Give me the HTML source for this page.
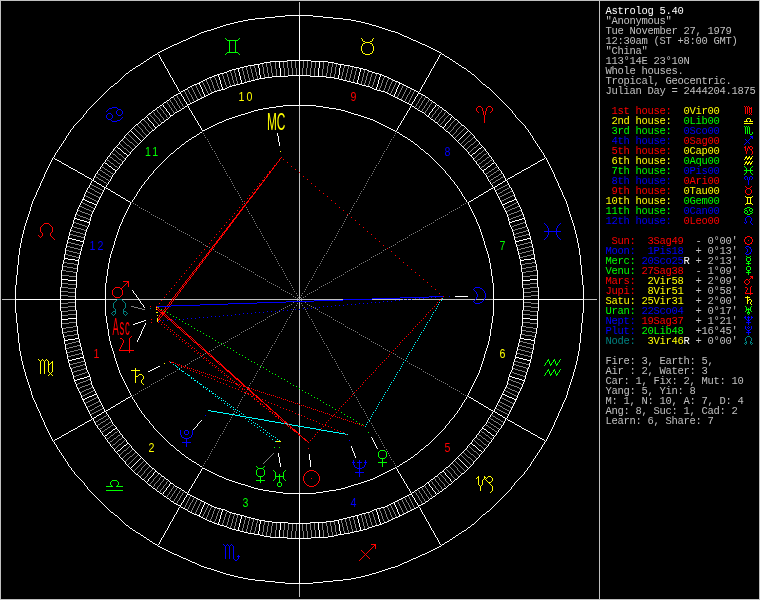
<!DOCTYPE html>
<html lang="en"><head><meta charset="utf-8"><title>Astrolog 5.40 chart</title>
<style>
html,body{margin:0;padding:0;background:#000;overflow:hidden}
svg{display:block;will-change:transform}
.g path{fill:none;stroke-width:1;shape-rendering:crispEdges}
.s text{font-family:"Liberation Mono",monospace;font-size:10.5px;letter-spacing:-.3px;white-space:pre}
text.h{font-family:"Liberation Sans",sans-serif;font-size:12.5px;text-anchor:middle}
text.o{font-family:"Liberation Sans",sans-serif}
</style></head><body>
<svg width="760" height="600" viewBox="0 0 760 600">
<rect width="760" height="600" fill="#000"/>
<g class="g">
<path transform="translate(0,.5)" stroke="#fff" d="m285 15h28m-38 1h10m28 0h10m-58 1h10m48 0h10m-78 1h10m68 0h10m-95 1h7m88 0h8m-108 1h5m103 0h5m-118 1h5m113 0h5m-127 1h4m123 0h4m-135 1h4m131 0h4m-143 1h4m139 0h3m-149 1h3m146 0h4m-156 1h3m153 0h3m-162 1h3m159 0h3m-168 1h3m165 0h3m-174 1h3m171 0h3m-181 1h4m177 0h3m-187 1h3m184 0h4m-194 1h3m191 0h3m-199 1h2m197 0h2m-203 1h2m201 0h2m-207 1h2m205 0h2m-212 1h3m209 0h3m-217 1h2m215 0h2m-221 1h2m219 0h2m-225 1h2m223 0h2m-230 1h3m227 0h3m-235 1h2m233 0h2m-239 1h2m237 0h2m-243 1h2m241 0h2m-248 1h3m245 0h3m-253 1h2m251 0h2m-257 1h2m255 0h2m-261 1h2m259 0h2m-265 1h2m263 0h2m-269 1h2m267 0h2m-273 1h2m271 0h2m-277 1h2m275 0h2m-281 1h2m279 0h2m-286 2h2m285 0h2m-291 1h2m290 1h2m-297 1h2m295 0h2m-302 2h2m301 0h2m-165 1h24m-167 1h2m124 0h17m24 0h17m125 0h2m-191 1h6m58 0h6m-193 1h2m117 0h4m70 0h4m118 0h2m-204 1h6m78 0h6m-206 1h2m108 0h6m90 0h6m109 0h2m-325 1h2m106 0h4m102 0h4m-114 1h4m110 0h5m103 0h2m-331 1h2m101 0h4m119 0h4m101 0h2m-234 1h4m127 0h4m-237 1h2m97 0h3m135 0h2m-142 1h2m140 0h3m96 0h2m-246 1h3m145 0h3m-249 1h2m92 0h4m151 0h4m-162 1h3m159 0h3m90 0h2m-260 1h3m71 0h22m72 0h2m-172 1h2m58 0h16m22 0h16m58 0h3m-178 1h3m53 0h7m54 0h8m53 0h2m-182 1h2m50 0h6m69 0h5m50 0h2m-186 1h2m48 0h4m80 0h4m48 0h2m-190 1h2m46 0h4m88 0h4m46 0h2m-194 1h2m44 0h4m96 0h4m44 0h3m-199 1h2m43 0h3m104 0h4m43 0h2m-285 1h2m80 0h3m40 0h4m111 0h4m40 0h3m-208 1h3m39 0h4m119 0h3m40 0h2m79 0h2m-293 1h2m38 0h4m126 0h4m38 0h2m-295 1h2m77 0h2m37 0h3m134 0h4m36 0h2m-220 1h2m37 0h2m141 0h2m36 0h2m77 0h2m-264 1h2m145 0h2m36 0h2m-227 1h2m34 0h4m149 0h3m35 0h2m-231 1h2m32 0h4m156 0h4m33 0h2m-235 1h2m31 0h3m164 0h4m31 0h2m-206 1h2m171 0h2m-209 1h3m29 0h2m175 0h2m29 0h3m-245 1h2m30 0h2m179 0h2m30 0h2m-249 1h2m30 0h2m183 0h2m30 0h2m-221 1h2m187 0h2m-224 1h2m29 0h2m191 0h2m29 0h2m-228 1h2m195 0h2m-201 1h2m199 0h2m-234 1h2m27 0h2m203 0h2m27 0h2m-238 1h2m207 0h2m-241 1h2m26 0h2m211 0h2m26 0h2m-245 1h2m215 0h2m-222 1h3m219 0h3m-252 1h2m121 0h33m121 0h2m-254 1h2m89 0h7m33 0h7m89 0h2m-257 1h2m110 0h7m47 0h6m111 0h2m-260 1h2m79 0h6m60 0h7m79 0h2m-159 1h5m73 0h5m-188 1h2m24 0h2m73 0h4m83 0h4m73 0h2m24 0h2m-269 1h2m72 0h3m91 0h3m72 0h2m-247 1h2m71 0h3m97 0h3m71 0h2m-275 1h2m94 0h3m103 0h3m-113 1h4m109 0h4m91 0h2m-281 1h3m65 0h3m117 0h3m-126 1h3m123 0h3m63 0h2m-197 1h3m129 0h3m-138 1h3m135 0h3m-228 1h2m22 0h2m58 0h3m141 0h3m58 0h2m22 0h2m-233 1h2m147 0h2m-153 1h2m151 0h2m-215 1h2m55 0h3m155 0h2m56 0h2m-220 1h2m160 0h2m-245 1h2m77 0h2m164 0h2m-225 1h2m53 0h2m168 0h2m77 0h2m-253 1h2m172 0h2m53 0h2m-287 1h2m52 0h2m176 0h2m53 0h2m-237 1h2m180 0h2m-186 1h2m184 0h2m-241 1h2m48 0h3m188 0h2m51 1h2m-248 1h2m195 0h2m-202 2h2m201 0h2m-208 2h2m207 0h2m-213 1h2m211 0h2m-218 2h2m217 0h2m-224 2h2m223 0h2m-231 3h2m231 0h2m-299 4h2m57 0h2m300 0h2m-60 1h2m-299 4h2m45 0h2m253 0h2m45 0h2m-348 2h2m341 0h2m-417 4h2m485 0h2m-487 1h2m481 0h2m-483 1h2m477 0h2m-478 2h2m41 0h2m385 0h2m41 0h2m-473 1h2m467 0h2m-469 1h2m463 0h2m-424 1h2m377 0h2m-421 1h2m457 0h2m-459 1h2m453 0h2m-455 1h2m38 0h2m369 0h2m38 0h2m-451 1h2m38 0h2m365 0h2m38 0h2m-446 2h2m439 0h2m-441 1h2m435 0h2m-437 1h2m431 0h2m-432 2h2m425 0h2m-427 1h2m421 0h2m-423 1h2m417 0h2m-418 2h2m411 0h2m-413 1h2m407 0h2m-408 2h2m401 0h2m-403 1h2m397 0h2m-398 2h2m391 0h2m-393 1h2m387 0h2m-389 1h2m383 0h2m-385 1h2m379 0h2m-380 2h2m373 0h2m-375 1h2m369 0h2m-370 2h2m363 0h2m-365 1h2m359 0h2m-360 2h2m353 0h2m-355 1h2m349 0h2m-394 1h3m429 0h3m-432 1h2m39 0h2m343 0h2m39 0h2m-427 1h2m39 0h2m339 0h2m38 0h3m-423 1h3m415 0h2m-417 1h2m411 0h2m-413 1h3m405 0h3m-431 14h3m445 0h3m-448 1h3m439 0h3m-442 1h4m431 0h4m-435 1h3m425 0h3m-428 1h3m419 0h3m-444 16h4m455 0h4m-459 1h4m447 0h4m-451 1h4m439 0h4m-443 1h4m431 0h4m-455 17h4m463 0h4m-467 1h7m449 0h7m-456 1h4m441 0h4m-463 19h7m462 0h8m-470 1h9m445 0h8m-75 16h13m-453 3h91m387 0h91m-516 19h9m445 0h8m-469 1h7m462 0h8m-394 1h2m-5 1h3m-6 1h3m-6 1h3m-5 1h2m-60 14h4m441 0h4m-456 1h7m449 0h7m-467 1h4m463 0h4m-455 17h4m431 0h4m-443 1h4m439 0h4m-451 1h4m447 0h4m-459 1h4m455 0h4m-373 6h2m-4 1h2m-4 1h2m-4 1h2m-4 1h2m-4 1h2m-63 5h3m419 0h3m-428 1h3m425 0h3m-435 1h4m431 0h4m-442 1h3m439 0h3m-448 1h3m445 0h3m-431 14h3m405 0h3m-413 1h2m411 0h2m-418 1h3m415 0h2m-422 1h2m39 0h2m339 0h2m38 0h3m-427 1h2m39 0h2m343 0h2m39 0h2m-432 1h3m429 0h3m-394 1h2m349 0h2m-355 1h2m353 0h2m-360 2h2m359 0h2m-365 1h2m363 0h2m-370 2h2m369 0h2m-375 1h2m373 0h2m-380 2h2m379 0h2m-385 1h2m383 0h2m-389 1h2m387 0h2m-393 1h2m391 0h2m-398 2h2m397 0h2m-403 1h2m401 0h2m-408 2h2m407 0h2m-413 1h2m411 0h2m-418 2h2m417 0h2m-423 1h2m421 0h2m-427 1h2m425 0h2m-432 2h2m431 0h2m-437 1h2m435 0h2m-441 1h2m439 0h2m-446 2h2m38 0h2m365 0h2m38 0h2m-451 1h2m38 0h2m369 0h2m38 0h2m-455 1h2m453 0h2m-459 1h2m457 0h2m-421 1h2m377 0h2m-424 1h2m463 0h2m-469 1h2m467 0h2m-473 1h2m41 0h2m385 0h2m41 0h2m-478 2h2m477 0h2m-483 1h2m481 0h2m-487 1h2m485 0h2m-417 4h2m341 0h2m-348 2h2m45 0h2m253 0h2m45 0h2m-54 4h2m-305 1h2m57 0h2m300 0h2m-299 4h2m231 0h2m-231 3h2m223 0h2m-224 2h2m217 0h2m-218 2h2m211 0h2m-213 1h2m207 0h2m-208 2h2m201 0h2m-202 2h2m195 0h2m47 1h2m-296 1h2m48 0h3m188 0h2m-190 1h2m184 0h2m-186 1h2m180 0h2m-236 1h2m52 0h2m176 0h2m53 0h2m-233 1h2m172 0h2m53 0h2m-284 1h2m53 0h2m168 0h2m77 0h2m-328 1h2m77 0h2m164 0h2m-166 1h2m160 0h2m-219 1h2m55 0h3m155 0h2m56 0h2m-215 1h2m151 0h2m-153 1h2m147 0h2m-233 1h2m22 0h2m58 0h3m141 0h3m58 0h2m22 0h2m-228 1h3m135 0h3m-138 1h3m129 0h3m-132 1h3m123 0h3m63 0h2m-259 1h3m65 0h3m117 0h3m-120 1h4m109 0h4m91 0h2m-302 1h2m94 0h3m103 0h3m-179 1h2m71 0h3m97 0h3m71 0h2m-247 1h2m72 0h3m91 0h3m72 0h2m-269 1h2m24 0h2m73 0h4m83 0h4m73 0h2m24 0h2m-188 1h5m73 0h5m-159 1h2m79 0h6m60 0h7m79 0h2m-260 1h2m110 0h7m47 0h6m111 0h2m-257 1h2m89 0h7m33 0h7m89 0h2m-254 1h2m121 0h33m121 0h2m-252 1h3m219 0h3m-222 1h2m215 0h2m-245 1h2m26 0h2m211 0h2m26 0h2m-241 1h2m207 0h2m-238 1h2m27 0h2m203 0h2m27 0h2m-234 1h2m199 0h2m-201 1h2m195 0h2m-228 1h2m29 0h2m191 0h2m29 0h2m-224 1h2m187 0h2m-221 1h2m30 0h2m183 0h2m30 0h2m-249 1h2m30 0h2m179 0h2m30 0h2m-245 1h3m29 0h2m175 0h2m29 0h3m-209 1h2m171 0h2m-206 1h2m31 0h3m164 0h4m31 0h2m-235 1h2m32 0h4m156 0h4m33 0h2m-231 1h2m34 0h4m149 0h3m35 0h2m-189 1h2m145 0h2m36 0h2m-224 1h2m37 0h2m141 0h2m36 0h2m77 0h2m-378 1h2m77 0h2m37 0h3m134 0h4m36 0h2m-216 1h2m38 0h4m126 0h4m38 0h2m-212 1h3m39 0h4m119 0h3m40 0h2m79 0h2m-370 1h2m80 0h3m40 0h4m111 0h4m40 0h3m-203 1h2m43 0h3m104 0h4m43 0h2m-199 1h2m44 0h4m96 0h4m44 0h3m-195 1h2m46 0h4m88 0h4m46 0h2m-190 1h2m48 0h4m80 0h4m48 0h2m-186 1h2m50 0h6m69 0h5m50 0h2m-182 1h3m53 0h7m54 0h8m53 0h2m-177 1h2m58 0h16m22 0h16m58 0h3m-173 1h3m71 0h22m72 0h2m-167 1h3m159 0h3m90 0h2m-348 1h2m92 0h4m151 0h4m-155 1h3m145 0h3m-148 1h2m140 0h3m96 0h2m-340 1h2m97 0h3m135 0h2m-137 1h4m127 0h4m-234 1h2m101 0h4m119 0h4m101 0h2m-226 1h4m110 0h5m103 0h2m-328 1h2m106 0h4m102 0h4m-216 1h2m108 0h6m90 0h6m109 0h2m-207 1h6m78 0h6m-203 1h2m117 0h4m70 0h4m118 0h2m-194 1h6m58 0h6m-190 1h2m124 0h17m24 0h17m125 0h2m-168 1h24m-164 1h2m301 0h2m-302 2h2m295 0h2m-4 1h2m-294 1h2m0 1h2m285 0h2m-286 2h2m279 0h2m-281 1h2m275 0h2m-277 1h2m271 0h2m-273 1h2m267 0h2m-269 1h2m263 0h2m-265 1h2m259 0h2m-261 1h2m255 0h2m-257 1h2m251 0h2m-253 1h3m245 0h3m-248 1h2m241 0h2m-243 1h2m237 0h2m-239 1h2m233 0h2m-235 1h3m227 0h3m-230 1h2m223 0h2m-225 1h2m219 0h2m-221 1h2m215 0h2m-217 1h3m209 0h3m-212 1h2m205 0h2m-207 1h2m201 0h2m-203 1h2m197 0h2m-199 1h3m191 0h3m-194 1h3m184 0h4m-188 1h4m177 0h3m-180 1h3m171 0h3m-174 1h3m165 0h3m-168 1h3m159 0h3m-162 1h3m153 0h3m-156 1h3m146 0h4m-150 1h4m139 0h3m-142 1h4m131 0h4m-135 1h4m123 0h4m-127 1h5m113 0h5m-118 1h5m103 0h5m-108 1h7m88 0h8m-96 1h10m68 0h10m-78 1h10m48 0h10m-58 1h10m28 0h10m-38 1h28"/>
<path transform="translate(.5,0)" stroke="#fff" d="m15 285v14m0 1v13m1-38v10m0 28v10m1-58v10m0 48v10m1-78v10m0 68v10m1-95v7m0 88v8m1-108v5m0 103v5m1-118v5m0 113v5m1-127v4m0 123v4m1-135v4m0 131v4m1-143v4m0 139v3m1-149v3m0 146v4m1-156v3m0 153v3m1-162v3m0 159v3m1-168v3m0 165v3m1-174v3m0 171v3m1-181v4m0 177v3m1-187v3m0 184v4m1-194v3m0 191v3m1-199v2m0 197v2m1-203v2m0 201v2m1-207v2m0 205v2m1-212v3m0 209v3m1-217v2m0 215v2m1-221v2m0 219v2m1-225v2m0 223v2m1-230v3m0 227v3m1-235v2m0 233v2m1-239v2m0 237v2m1-243v2m0 241v2m1-248v3m0 245v3m1-253v2m0 251v2m1-257v2m0 255v2m1-261v2m0 259v2m1-265v2m0 263v2m1-269v2m0 267v2m1-273v2m0 271v2m1-277v2m0 275v2m1-281v2m0 279v2m1-284v1m0 283v1m1-287v2m0 1v1m0 281v1m0 1v2m1-291v2m0 289v1m1-293v1m0 292v2m1-297v2m0 295v2m1-300v1m0 299v1m1-303v2m0 301v2m1-306v1m0 140v12m0 1v11m0 141v1m1-309v2m0 16v1m0 107v9m0 1v7m0 24v8m0 1v8m0 108v1m0 16v2m1-312v1m0 120v6m0 58v6m0 121v1m1-315v2m0 117v4m0 70v4m0 118v2m1-318v1m0 113v4m0 1v1m0 78v2m0 1v3m0 114v1m1-321v2m0 108v6m0 90v6m0 109v2m1-325v2m0 106v4m0 102v4m0 107v1m1-327v1m0 104v4m0 110v5m0 103v2m1-331v2m0 31v1m0 69v2m0 1v1m0 119v1m0 1v2m0 69v1m0 31v2m1-334v1m0 99v4m0 127v4m0 99v1m1-337v2m0 97v3m0 135v2m0 98v1m1-339v1m0 97v2m0 140v3m0 96v2m1-342v1m0 95v3m0 145v3m0 95v1m1-345v2m0 92v4m0 151v4m0 92v1m1-347v1m0 91v1m0 1v1m0 159v1m0 1v1m0 90v2m1-350v1m0 89v3m0 71v11m0 1v10m0 72v2m0 90v1m1-352v1m0 88v2m0 58v8m0 1v7m0 22v8m0 1v7m0 58v3m0 88v1m1-354v1m0 48v1m0 37v3m0 53v7m0 54v8m0 53v2m0 38v1m0 48v1m1-356v1m0 85v2m0 50v1m0 1v4m0 69v4m0 51v2m0 86v1m1-358v1m0 84v2m0 48v4m0 80v4m0 48v2m0 85v1m1-360v1m0 83v2m0 46v4m0 88v4m0 46v2m0 84v1m1-362v1m0 82v2m0 44v4m0 96v4m0 44v3m0 82v1m1-364v1m0 82v1m0 43v3m0 104v4m0 43v1m0 82v1m1-367v2m0 80v2m0 41v1m0 1v2m0 111v2m0 1v1m0 41v2m0 80v1m1-369v1m0 60v1m0 18v3m0 39v4m0 119v3m0 40v2m0 19v1m0 59v2m1-372v1m0 78v2m0 38v4m0 126v4m0 38v2m0 79v1m1-375v2m0 77v2m0 37v3m0 134v4m0 36v2m0 78v1m1-377v1m0 77v2m0 37v2m0 141v2m0 36v2m0 77v2m1-380v1m0 77v1m0 37v2m0 145v2m0 36v2m0 77v1m1-382v1m0 76v2m0 34v1m0 1v2m0 149v2m0 36v2m0 76v1m1-384v1m0 75v2m0 32v4m0 156v4m0 33v2m0 75v1m1-386v1m0 72v1m0 1v2m0 31v3m0 164v4m0 31v2m0 1v1m0 72v1m1-388v1m0 106v2m0 171v2m0 106v1m1-390v1m0 73v2m0 30v2m0 175v2m0 30v2m0 73v1m1-392v1m0 72v2m0 30v2m0 179v2m0 30v2m0 72v1m1-394v1m0 71v2m0 30v2m0 183v2m0 30v2m0 71v1m1-396v1m0 71v1m0 8v1m0 22v1m0 187v1m0 22v1m0 8v1m0 71v1m1-398v1m0 70v2m0 29v2m0 191v2m0 29v2m0 70v1m1-400v1m0 70v1m0 29v2m0 195v2m0 29v1m0 70v1m1-402v1m0 70v1m0 28v2m0 199v2m0 28v1m0 70v1m1-404v1m0 69v2m0 27v2m0 203v2m0 27v2m0 69v1m1-406v1m0 69v1m0 18v1m0 8v2m0 207v2m0 8v1m0 18v1m0 69v1m1-408v1m0 68v2m0 26v2m0 211v2m0 26v2m0 68v1m1-410v1m0 68v1m0 26v2m0 215v2m0 26v1m0 68v1m1-412v1m0 68v1m0 25v2m0 219v2m0 25v1m0 68v1m1-414v1m0 67v2m0 121v16m0 1v16m0 121v2m0 67v1m1-416v1m0 67v1m0 25v2m0 89v7m0 33v7m0 89v2m0 25v1m0 67v1m1-418v1m0 66v2m0 5v1m0 19v1m0 84v7m0 47v6m0 85v1m0 19v1m0 5v2m0 66v1m1-420v1m0 66v1m0 8v1m0 16v2m0 79v6m0 60v7m0 79v2m0 16v1m0 8v1m0 66v1m1-422v1m0 66v1m0 25v1m0 76v5m0 73v5m0 76v1m0 25v1m0 66v1m1-424v1m0 65v2m0 24v2m0 9v1m0 63v4m0 83v4m0 63v1m0 9v2m0 24v2m0 65v1m1-360v1m0 14v1m0 9v2m0 72v3m0 91v3m0 72v2m0 9v1m0 14v1m1-296v1m0 16v1m0 6v2m0 71v3m0 97v3m0 71v2m0 6v1m0 16v1m1-363v1m0 63v2m0 23v1m0 70v3m0 103v3m0 70v1m0 23v1m0 64v1m1-430v1m0 63v1m0 24v1m0 67v4m0 109v4m0 67v1m0 23v2m0 63v1m1-368v1m0 23v2m0 20v1m0 44v3m0 117v3m0 44v1m0 20v1m0 24v1m1-306v1m0 88v3m0 123v3m0 63v1m0 24v1m1-371v1m0 62v1m0 1v1m0 21v1m0 62v3m0 129v3m0 62v1m0 21v1m0 1v1m0 62v1m1-436v1m0 62v1m0 23v1m0 60v3m0 135v3m0 60v1m0 23v1m0 62v1m1-438v1m0 61v2m0 22v2m0 58v3m0 141v3m0 58v2m0 22v2m0 61v1m1-440v1m0 61v1m0 7v1m0 15v1m0 30v1m0 27v2m0 147v2m0 27v1m0 30v1m0 15v1m0 7v1m0 61v1m1-442v1m0 61v1m0 9v1m0 13v1m0 57v2m0 151v2m0 57v1m0 13v1m0 9v1m0 61v1m1-444v1m0 61v1m0 11v1m0 10v2m0 55v3m0 155v2m0 56v2m0 10v1m0 11v1m0 61v1m1-446v1m0 61v1m0 13v1m0 8v1m0 55v2m0 160v2m0 56v1m0 8v1m0 13v1m0 61v1m1-448v1m0 60v2m0 22v1m0 54v2m0 164v2m0 55v1m0 22v1m0 61v1m1-450v1m0 60v1m0 22v2m0 39v1m0 13v2m0 168v2m0 14v1m0 39v1m0 22v2m0 60v1m1-391v1m0 19v1m0 2v1m0 53v2m0 172v2m0 53v2m0 2v1m0 19v1m1-332v1m0 22v1m0 52v2m0 176v2m0 53v1m0 22v1m1-394v1m0 59v1m0 74v2m0 180v2m0 75v1m0 59v1m1-456v1m0 59v1m0 22v1m0 50v2m0 184v2m0 51v1m0 22v1m0 59v1m1-398v1m0 21v2m0 48v3m0 188v2m0 1v1m0 48v1m0 22v1m1-340v1m0 1v1m0 19v1m0 243v1m0 50v2m0 19v1m0 1v1m1-401v1m0 58v1m0 3v1m0 17v1m0 49v2m0 88v1m0 106v2m0 49v1m0 17v1m0 3v1m0 58v1m1-403v1m0 5v1m0 15v1m0 49v1m0 91v2m0 106v1m0 49v1m0 15v1m0 5v1m1-346v1m0 7v1m0 13v1m0 48v2m0 94v1m0 106v2m0 48v1m0 13v1m0 7v1m1-406v1m0 57v1m0 9v1m0 11v1m0 48v1m0 97v1m0 107v1m0 48v1m0 11v1m0 9v1m0 57v1m1-396v1m0 9v1m0 47v2m0 99v2m0 106v2m0 47v1m0 9v1m1-326v1m0 7v1m0 46v2m0 103v1m0 42v2m0 63v2m0 46v1m0 7v1m1-339v1m0 14v1m0 5v1m0 46v1m0 106v2m0 38v2m0 67v1m0 46v1m0 5v1m0 14v1m1-354v1m0 16v1m0 3v1m0 45v2m0 109v1m0 35v2m0 70v2m0 45v1m0 3v1m0 16v1m1-413v1m0 56v1m0 18v1m0 1v1m0 45v1m0 112v2m0 31v2m0 74v1m0 45v1m0 1v1m0 18v1m0 56v1m1-415v1m0 20v1m0 44v2m0 115v1m0 27v3m0 77v2m0 44v1m0 20v1m1-339v1m0 44v1m0 118v1m0 24v2m0 82v1m0 44v1m1-397v1m0 76v1m0 44v1m0 120v2m0 20v2m0 85v1m0 44v1m0 76v1m1-419v1m0 19v1m0 43v2m0 123v1m0 17v2m0 88v2m0 43v1m0 19v1m1-364v1m0 19v1m0 43v1m0 141v2m0 92v1m0 43v1m0 19v1m1-422v1m0 55v1m0 19v1m0 43v1m0 237v1m0 43v1m0 19v1m0 55v1m1-424v1m0 1v1m0 17v1m0 43v1m0 239v1m0 43v1m0 17v1m0 1v1m1-370v1m0 3v2m0 14v1m0 42v2m0 241v1m0 43v1m0 14v2m0 3v1m1-427v1m0 61v1m0 12v1m0 42v1m0 244v2m0 42v1m0 12v1m0 61v1m1-420v1m0 10v1m0 42v1m0 247v1m0 42v1m0 10v1m1-366v1m0 9v1m0 8v1m0 42v1m0 249v1m0 42v1m0 8v1m0 9v1m1-431v1m0 54v1m0 11v1m0 49v1m0 251v1m0 49v1m0 11v1m0 54v1m1-419v2m0 45v2m0 253v2m0 45v2m1-349v1m0 2v1m0 40v1m0 257v1m0 40v1m0 2v1m1-364v1m0 18v1m0 40v1m0 259v1m0 40v1m0 18v1m1-382v1m0 59v1m0 261v1m0 59v1m1-438v1m0 72v1m0 40v1m0 263v1m0 40v1m0 72v1m1-492v1m0 111v1m0 265v1m0 111v1m1-490v2m0 49v1m0 58v1m0 267v1m0 58v1m0 49v2m1-487v2m0 65v1m0 39v1m0 269v1m0 39v1m0 65v2m1-483v2m0 62v1m0 39v1m0 271v1m0 39v1m0 62v2m1-479v1m0 42v1m0 57v1m0 273v1m0 57v1m0 42v1m1-476v2m0 39v1m0 1v2m0 54v1m0 275v1m0 54v2m0 1v1m0 39v2m1-473v2m0 41v1m0 13v1m0 38v1m0 277v1m0 38v1m0 13v1m0 41v2m1-469v2m0 40v1m0 11v1m0 38v1m0 279v1m0 38v1m0 11v1m0 40v2m1-465v1m0 32v1m0 7v2m0 47v1m0 281v1m0 47v2m0 7v1m0 32v1m1-462v2m0 40v1m0 45v1m0 283v1m0 45v1m0 40v2m1-459v2m0 39v1m0 5v1m0 37v1m0 285v1m0 37v1m0 5v1m0 39v2m1-455v2m0 24v1m0 13v2m0 2v1m0 37v1m0 287v1m0 37v1m0 2v2m0 13v1m0 24v2m1-451v2m0 21v1m0 17v1m0 37v1m0 289v1m0 37v1m0 17v1m0 21v2m1-447v1m0 443v1m1-444v2m0 439v2m1-441v2m0 14v1m0 17v1m0 37v1m0 293v1m0 37v1m0 17v1m0 14v2m1-437v2m0 29v1m0 37v1m0 295v1m0 37v1m0 29v2m1-433v1m0 65v1m0 297v1m0 65v1m1-430v2m0 62v1m0 299v1m0 62v2m1-427v2m0 421v2m1-423v2m0 417v2m1-419v1m0 55v1m0 303v1m0 55v1m1-416v1m0 53v1m0 305v1m0 53v1m1-413v2m0 13v1m0 35v1m0 307v1m0 35v1m0 13v2m1-409v1m0 405v1m1-406v2m0 401v2m1-403v2m0 6v1m0 35v1m0 311v1m0 35v1m0 6v2m1-399v1m0 40v1m0 313v1m0 40v1m1-396v2m0 391v2m1-409v1m0 16v1m0 387v1m0 16v1m1-405v2m0 32v1m0 317v1m0 32v2m1-385v2m0 379v2m1-381v1m0 377v1m1-378v2m0 25v1m0 321v1m0 25v2m1-375v2m0 369v2m1-371v1m0 313v1m0 53v1m1-368v2m0 310v1m0 52v2m1-365v2m0 307v1m0 51v2m1-361v1m0 14v1m0 290v1m0 36v1m0 14v1m1-358v2m0 301v2m0 50v2m1-355v2m0 298v1m0 50v2m1-392v1m0 40v1m0 7v1m0 288v1m0 42v1m0 7v1m0 40v1m1-430v2m0 39v2m0 293v1m0 49v2m0 39v2m1-427v2m0 39v2m0 290v1m0 48v2m0 38v3m1-423v3m0 415v2m1-417v2m0 411v2m1-413v2m0 407v2m14-430v2m0 445v2m1-447v3m0 439v3m1-442v4m0 431v4m1-435v3m0 425v3m1-428v2m0 421v2m16-443v3m0 455v3m1-458v4m0 447v4m1-451v4m0 439v4m1-443v3m0 433v3m17-454v3m0 463v3m1-466v7m0 449v7m1-456v3m0 443v3m17-391v3m1 0v6m0 311v4m1-395v6m0 74v4m0 311v6m0 67v7m1-469v8m0 387v4m0 56v7m19-514v44m0 1v14m0 1v29m0 389v29m0 1v14m0 1v44m10-129v6m1 0v7m8-399v8m0 447v7m1-468v6m0 462v7m19-462v3m0 443v3m1-456v7m0 449v7m1-466v3m0 463v3m11-88v2m1 0v3m1 0v2m1 0v3m1 0v2m2-378v3m0 433v3m1-443v4m0 439v4m1-451v4m0 447v4m1-458v3m0 455v3m11-93v1m1 0v2m1 0v2m1 0v2m1 0v2m1-359v2m0 357v2m0 62v2m1-428v3m0 361v1m0 63v3m1-435v4m0 431v4m1-442v3m0 439v3m1-447v2m0 445v2m14-430v2m0 407v2m1-413v2m0 37v1m0 335v1m0 37v2m1-418v3m0 38v1m0 337v1m0 38v2m1-422v2m0 39v2m0 339v2m0 38v3m1-427v2m0 39v2m0 343v2m0 39v2m1-430v1m0 40v1m0 7v1m0 331v1m0 7v1m0 40v1m1-392v2m0 349v2m1-355v2m0 353v2m1-358v1m0 14v1m0 327v1m0 14v1m1-361v2m0 359v2m1-365v2m0 363v2m1-368v1m0 367v1m1-371v2m0 369v2m1-375v2m0 25v1m0 321v1m0 25v2m1-378v1m0 377v1m1-381v2m0 379v2m1-385v2m0 32v1m0 317v1m0 32v2m1-388v1m0 387v1m1-392v2m0 391v2m1-396v1m0 40v1m0 313v1m0 40v1m1-399v2m0 6v1m0 35v1m0 311v1m0 35v1m0 6v2m1-403v2m0 401v2m1-406v1m0 405v1m1-409v2m0 13v1m0 35v1m0 307v1m0 35v1m0 13v2m1-413v1m0 53v1m0 305v1m0 53v1m1-416v1m0 55v1m0 303v1m0 55v1m1-419v2m0 57v1m0 301v1m0 57v2m1-423v2m0 421v2m1-427v2m0 425v2m1-430v1m0 65v1m0 297v1m0 65v1m1-433v2m0 29v1m0 37v1m0 295v1m0 37v1m0 29v2m1-437v2m0 14v1m0 17v1m0 37v1m0 293v1m0 37v1m0 17v1m0 14v2m1-441v2m0 35v1m0 367v1m0 35v2m1-444v1m0 443v1m1-447v2m0 21v1m0 16v1m0 38v1m0 289v1m0 38v1m0 16v1m0 21v2m1-451v2m0 24v1m0 13v2m0 2v1m0 37v1m0 287v1m0 37v1m0 2v2m0 13v1m0 24v2m1-455v2m0 39v1m0 5v1m0 37v1m0 285v1m0 37v1m0 5v1m0 39v2m1-459v2m0 40v1m0 45v1m0 283v1m0 45v1m0 40v2m1-462v1m0 32v1m0 7v2m0 47v1m0 281v1m0 47v2m0 7v1m0 32v1m1-465v2m0 40v1m0 11v1m0 38v1m0 279v1m0 38v1m0 11v1m0 40v2m1-469v2m0 41v1m0 13v1m0 38v1m0 277v1m0 38v1m0 13v1m0 41v2m1-473v2m0 39v1m0 1v2m0 54v1m0 275v1m0 54v2m0 1v1m0 39v2m1-476v1m0 42v1m0 57v1m0 273v1m0 57v1m0 42v1m1-479v2m0 62v1m0 39v1m0 271v1m0 39v1m0 62v2m1-483v2m0 65v1m0 39v1m0 269v1m0 39v1m0 65v2m1-487v2m0 49v1m0 18v1m0 39v1m0 267v1m0 39v1m0 18v1m0 49v2m1-490v1m0 111v1m0 265v1m0 111v1m1-492v1m0 113v1m0 263v1m0 113v1m1-438v1m0 59v1m0 261v1m0 59v1m1-382v1m0 18v1m0 40v1m0 259v1m0 40v1m0 18v1m1-435v1m0 70v1m0 2v1m0 40v1m0 257v1m0 40v1m0 2v1m0 70v1m1-420v2m0 4v1m0 40v2m0 253v2m0 40v1m0 4v2m1-364v1m0 11v1m0 49v1m0 251v1m0 49v1m0 11v1m1-376v1m0 9v1m0 51v1m0 249v1m0 51v1m0 9v1m1-374v1m0 7v1m0 10v1m0 42v1m0 247v1m0 42v1m0 10v1m0 7v1m1-428v1m0 61v1m0 12v1m0 42v1m0 244v2m0 42v1m0 12v1m0 61v1m1-423v2m0 14v1m0 42v2m0 241v1m0 43v1m0 14v2m1-366v1m0 1v1m0 17v1m0 43v1m0 239v1m0 43v1m0 17v1m0 1v1m1-424v1m0 55v1m0 19v1m0 43v1m0 237v1m0 43v1m0 19v1m0 55v1m1-422v1m0 19v1m0 43v1m0 235v1m0 43v1m0 19v1m1-364v1m0 19v1m0 43v2m0 231v2m0 43v1m0 19v1m1-419v1m0 76v1m0 44v1m0 229v1m0 44v1m0 76v1m1-397v1m0 44v1m0 227v1m0 44v1m1-339v1m0 20v1m0 44v2m0 223v2m0 44v1m0 20v1m1-415v1m0 56v1m0 18v1m0 1v1m0 45v1m0 221v1m0 45v1m0 1v1m0 18v1m0 56v1m1-413v1m0 16v1m0 3v1m0 45v2m0 217v2m0 45v1m0 3v1m0 16v1m1-354v1m0 14v1m0 5v1m0 46v1m0 215v1m0 46v1m0 5v1m0 14v1m1-410v1m0 57v1m0 12v1m0 7v1m0 46v2m0 211v2m0 46v1m0 7v1m0 12v1m0 57v1m1-397v1m0 9v1m0 47v2m0 207v2m0 47v1m0 9v1m1-328v1m0 11v1m0 48v1m0 205v1m0 48v1m0 11v1m1-338v1m0 7v1m0 13v1m0 48v2m0 201v2m0 48v1m0 13v1m0 7v1m1-346v1m0 5v1m0 15v1m0 49v1m0 199v1m0 49v1m0 15v1m0 5v1m1-403v1m0 58v1m0 3v1m0 17v1m0 49v2m0 195v2m0 49v1m0 17v1m0 3v1m0 58v1m1-460v1m0 58v1m0 1v1m0 19v1m0 243v1m0 50v2m0 19v1m0 1v1m0 58v1m1-399v1m0 21v2m0 48v3m0 188v2m0 1v1m0 48v1m0 22v1m1-338v1m0 22v1m0 50v2m0 184v2m0 51v1m0 22v1m1-396v1m0 59v1m0 74v2m0 180v2m0 75v1m0 59v1m1-454v1m0 59v1m0 22v1m0 52v2m0 176v2m0 53v1m0 22v1m0 59v1m1-392v1m0 19v1m0 2v1m0 53v2m0 172v2m0 53v2m0 2v1m0 19v1m1-330v1m0 22v2m0 39v1m0 13v2m0 168v2m0 14v1m0 39v1m0 22v2m1-389v1m0 60v2m0 22v1m0 54v2m0 164v2m0 55v1m0 22v1m0 61v1m1-448v1m0 61v1m0 13v1m0 8v1m0 55v2m0 160v2m0 56v1m0 8v1m0 13v1m0 61v1m1-446v1m0 61v1m0 11v1m0 10v2m0 55v3m0 155v2m0 56v2m0 10v1m0 11v1m0 61v1m1-444v1m0 61v1m0 9v1m0 13v1m0 57v2m0 151v2m0 57v1m0 13v1m0 9v1m0 61v1m1-442v1m0 61v1m0 7v1m0 15v1m0 30v1m0 27v2m0 147v2m0 27v1m0 30v1m0 15v1m0 7v1m0 61v1m1-440v1m0 61v2m0 22v2m0 58v3m0 141v3m0 58v2m0 22v2m0 61v1m1-438v1m0 62v1m0 23v1m0 60v3m0 135v3m0 60v1m0 23v1m0 62v1m1-436v1m0 62v1m0 1v1m0 21v1m0 62v3m0 129v3m0 62v1m0 21v1m0 1v1m0 62v1m1-434v1m0 62v1m0 88v3m0 123v3m0 63v1m0 24v1m0 62v1m1-369v1m0 23v2m0 20v1m0 44v3m0 117v3m0 44v1m0 20v1m0 24v1m1-304v1m0 24v1m0 67v4m0 109v4m0 67v1m0 23v2m1-366v1m0 63v2m0 23v1m0 70v3m0 103v3m0 70v1m0 23v1m0 64v1m1-428v1m0 64v1m0 16v1m0 6v2m0 71v3m0 97v3m0 71v2m0 6v1m0 16v1m0 64v1m1-361v1m0 14v1m0 9v2m0 72v3m0 91v3m0 72v2m0 9v1m0 14v1m1-294v2m0 24v2m0 9v1m0 63v4m0 83v4m0 63v1m0 9v2m0 24v2m1-358v1m0 66v1m0 25v1m0 76v5m0 73v5m0 76v1m0 25v1m0 66v1m1-422v1m0 66v1m0 8v1m0 16v2m0 79v6m0 60v7m0 79v2m0 16v1m0 8v1m0 66v1m1-420v1m0 66v2m0 5v1m0 19v1m0 84v7m0 47v6m0 85v1m0 19v1m0 5v2m0 66v1m1-418v1m0 67v1m0 25v2m0 89v7m0 33v7m0 89v2m0 25v1m0 67v1m1-416v1m0 67v2m0 121v16m0 1v16m0 121v2m0 67v1m1-414v1m0 68v1m0 25v2m0 219v2m0 25v1m0 68v1m1-412v1m0 68v1m0 26v2m0 215v2m0 26v1m0 68v1m1-410v1m0 68v2m0 26v2m0 211v2m0 26v2m0 68v1m1-408v1m0 69v1m0 18v1m0 8v2m0 207v2m0 8v1m0 18v1m0 69v1m1-406v1m0 69v2m0 27v2m0 203v2m0 27v2m0 69v1m1-404v1m0 70v1m0 28v2m0 199v2m0 28v1m0 70v1m1-402v1m0 70v1m0 29v2m0 195v2m0 29v1m0 70v1m1-400v1m0 70v2m0 29v2m0 191v2m0 29v2m0 70v1m1-398v1m0 71v1m0 8v1m0 22v1m0 187v1m0 22v1m0 8v1m0 71v1m1-396v1m0 71v2m0 30v2m0 183v2m0 30v2m0 71v1m1-394v1m0 72v2m0 30v2m0 179v2m0 30v2m0 72v1m1-392v1m0 73v2m0 30v2m0 175v2m0 30v2m0 73v1m1-390v1m0 106v2m0 171v2m0 106v1m1-388v1m0 72v1m0 1v2m0 31v3m0 164v4m0 31v2m0 1v1m0 72v1m1-386v1m0 75v2m0 32v4m0 156v4m0 33v2m0 75v1m1-384v1m0 76v2m0 34v1m0 1v2m0 149v2m0 36v2m0 76v1m1-382v1m0 77v1m0 37v2m0 145v2m0 36v2m0 77v1m1-380v1m0 77v2m0 37v2m0 141v2m0 36v2m0 77v2m1-378v2m0 77v2m0 37v3m0 134v4m0 36v2m0 78v1m1-374v1m0 78v2m0 38v4m0 126v4m0 38v2m0 79v1m1-372v1m0 60v1m0 18v3m0 39v4m0 119v3m0 40v2m0 19v1m0 59v2m1-370v2m0 80v2m0 41v1m0 1v2m0 111v2m0 1v1m0 41v2m0 80v1m1-366v1m0 82v1m0 43v3m0 104v4m0 43v1m0 82v1m1-364v1m0 82v2m0 44v4m0 96v4m0 44v3m0 82v1m1-362v1m0 83v2m0 46v4m0 88v4m0 46v2m0 84v1m1-360v1m0 84v2m0 48v4m0 80v4m0 48v2m0 85v1m1-358v1m0 85v2m0 50v1m0 1v4m0 69v4m0 51v2m0 86v1m1-356v1m0 48v1m0 37v3m0 53v7m0 54v8m0 53v2m0 38v1m0 48v1m1-354v1m0 88v2m0 58v8m0 1v7m0 22v8m0 1v7m0 58v3m0 88v1m1-352v1m0 89v3m0 71v11m0 1v10m0 72v2m0 90v1m1-350v1m0 91v1m0 1v1m0 159v1m0 1v1m0 90v2m1-348v2m0 92v4m0 151v4m0 92v1m1-344v1m0 95v3m0 145v3m0 95v1m1-342v1m0 97v2m0 140v3m0 96v2m1-340v2m0 97v3m0 135v2m0 98v1m1-336v1m0 99v4m0 127v4m0 99v1m1-334v2m0 31v1m0 69v2m0 1v1m0 119v1m0 1v2m0 69v1m0 31v2m1-331v1m0 104v4m0 110v5m0 103v2m1-328v2m0 106v4m0 102v4m0 107v1m1-324v2m0 108v6m0 90v6m0 109v2m1-321v1m0 113v4m0 1v1m0 78v2m0 1v3m0 114v1m1-318v2m0 117v4m0 70v4m0 118v2m1-315v1m0 120v6m0 58v6m0 121v1m1-312v2m0 16v1m0 107v9m0 1v7m0 24v8m0 1v8m0 108v1m0 16v2m1-309v1m0 140v12m0 1v11m0 141v1m1-306v2m0 301v2m1-303v1m0 299v1m1-300v2m0 295v2m1-297v1m0 292v2m1-294v2m0 289v1m1-290v2m0 1v1m0 281v1m0 1v2m1-287v1m0 283v1m1-284v2m0 279v2m1-281v2m0 275v2m1-277v2m0 271v2m1-273v2m0 267v2m1-269v2m0 263v2m1-265v2m0 259v2m1-261v2m0 255v2m1-257v2m0 251v2m1-253v3m0 245v3m1-248v2m0 241v2m1-243v2m0 237v2m1-239v2m0 233v2m1-235v3m0 227v3m1-230v2m0 223v2m1-225v2m0 219v2m1-221v2m0 215v2m1-217v3m0 209v3m1-212v2m0 205v2m1-207v2m0 201v2m1-203v2m0 197v2m1-199v3m0 191v3m1-194v3m0 184v4m1-188v4m0 177v3m1-180v3m0 171v3m1-174v3m0 165v3m1-168v3m0 159v3m1-162v3m0 153v3m1-156v3m0 146v4m1-150v4m0 139v3m1-142v4m0 131v4m1-135v4m0 123v4m1-127v5m0 113v5m1-118v5m0 103v5m1-108v7m0 88v8m1-96v10m0 68v10m1-78v10m0 48v10m1-58v10m0 28v10m1-38v14m0 1v13"/>
<path transform="translate(0,.5)" stroke="#c0c0c0" d="m0 0h760m-758 299h13m91 0h11m5 0h16m1 0h33m3 0h124m1 0h43m29 0h31m1 0h3m1 0h3m1 0h63m1 0h8m1 0h8m91 0h13m-597 300h760"/>
<path transform="translate(.5,0)" stroke="#c0c0c0" d="m0 1v598m173-300v1m126-298v13m0 91v66m0 1v126m0 1v1m0 1v7m0 1v78m0 1v15m0 1v21m0 1v7m0 2v57m0 91v13m300-596v598m160-598v598"/>
<path transform="translate(0,.5)" stroke="#808080" d="m468 141h2m-340 1h2m339 2h2m-346 1h2m345 2h2m-352 1h2m353 5h2m-368 1h2m4 0h2m363 0h2m-376 3h2m375 0h2m-370 2h2m357 0h2m-373 1h2m5 0h2m367 0h2m5 0h2m-381 3h2m5 0h2m359 0h2m5 0h2m-373 3h2m365 0h2m-382 1h2m391 0h2m-392 2h2m385 0h2m-394 1h2m395 0h2m-391 1h2m379 0h2m-388 1h2m389 0h2m-385 1h2m373 0h2m-390 1h2m6 0h2m383 0h2m6 0h2m-400 2h2m6 0h2m377 0h2m6 0h2m-402 1h2m5 0h2m389 0h2m5 0h2m-404 2h2m5 0h2m383 0h2m5 0h2m-399 1h2m393 0h2m-394 2h2m387 0h2m-403 3h2m411 0h2m-413 1h2m407 0h2m-409 1h2m403 0h2m-413 1h2m6 0h2m399 0h2m6 0h2m-417 1h2m6 0h2m395 0h2m6 0h2m-4 1h2m-410 1h2m413 0h2m-424 1h2m7 0h2m401 0h2m6 0h2m-420 1h2m7 0h2m397 0h2m6 0h2m-416 1h2m410 0h2m-412 1h2m406 0h2m8 0h2m-428 1h2m8 0h2m402 0h2m8 0h2m-424 1h2m8 0h2m408 0h2m-420 1h2m414 0h2m-416 1h2m410 0h2m-412 1h2m406 0h2m-408 1h2m-15 2h2m429 0h2m-431 1h2m425 0h2m-427 1h2m421 0h2m-432 1h2m7 0h2m417 0h2m7 0h2m-437 1h2m7 0h2m413 0h2m7 0h2m-433 1h2m426 0h3m-429 1h3m421 0h2m-434 1h2m9 0h2m417 0h2m9 0h2m-441 1h2m9 0h2m413 0h2m9 0h2m-437 1h3m429 0h3m-432 1h3m423 0h3m-438 1h2m10 0h2m419 0h2m10 0h2m-445 1h2m439 0h2m-441 1h3m433 0h3m-436 1h3m427 0h3m-430 1h2m423 0h2m-425 1h2m419 0h2m-437 3h2m447 0h2m-449 1h3m441 0h3m-444 1h3m435 0h3m-438 1h3m429 0h3m-432 1h2m425 0h2m-440 1h3m445 0h3m-448 1h4m437 0h4m-441 1h3m431 0h3m-447 1h2m11 0h2m427 0h2m11 0h2m-455 1h3m447 0h3m-450 1h4m439 0h4m-443 1h3m433 0h3m-449 1h3m10 0h2m429 0h2m10 0h3m-456 1h4m445 0h4m-449 1h4m437 0h4m-441 1h3m431 0h3m-450 5h3m457 0h3m-460 1h4m449 0h4m-453 1h4m441 0h4m-445 1h3m435 0h3m-453 1h3m459 0h3m-462 1h4m451 0h4m-455 1h4m443 0h4m-447 1h3m437 0h3m-455 1h3m461 0h3m-464 1h4m453 0h4m-457 1h4m445 0h4m-449 1h3m439 0h3m-457 1h3m463 0h3m-466 1h4m455 0h4m-459 1h4m447 0h4m-451 1h3m441 0h3m-459 5h3m465 0h3m-468 1h7m451 0h7m-458 1h4m443 0h4m-462 2h4m465 0h4m-469 1h6m453 0h6m-459 1h4m445 0h4m-464 2h4m467 0h4m-471 1h7m453 0h7m-460 1h3m447 0h3m-464 3h7m461 0h7m-468 1h7m447 0h7m-468 7h6m462 0h7m-469 1h8m447 0h7m-469 3h7m462 0h8m-470 1h7m449 0h6m-469 3h7m463 0h7m-470 1h7m449 0h7m-470 3h7m463 0h7m-470 1h7m449 0h7m-463 6h7m449 0h7m-470 1h7m463 0h7m-470 3h7m56 0h3m390 0h7m-470 1h7m66 0h4m393 0h7m-400 1h4m0 1h3m-77 1h8m447 0h7m-468 1h6m462 0h7m-469 3h8m447 0h7m-468 1h6m462 0h7m-468 7h7m447 0h7m-468 1h7m461 0h7m-464 3h4m445 0h4m-460 1h7m453 0h7m-470 1h3m467 0h3m-463 2h4m445 0h4m-459 1h6m453 0h6m-469 1h4m465 0h4m-462 2h4m443 0h4m-458 1h7m451 0h7m-468 1h3m465 0h3m-459 5h3m441 0h3m-451 1h4m447 0h4m-459 1h4m455 0h4m-465 1h2m463 0h2m-456 1h3m439 0h3m-449 1h4m445 0h4m-457 1h4m453 0h4m-464 1h3m461 0h3m-455 1h3m437 0h3m-447 1h4m443 0h4m-455 1h4m451 0h4m-462 1h3m459 0h3m-453 1h3m435 0h3m-445 1h4m441 0h4m-453 1h4m449 0h4m-460 1h3m457 0h3m-450 5h3m431 0h3m-441 1h4m437 0h4m-449 1h4m445 0h4m-456 1h3m10 0h2m429 0h2m10 0h3m-449 1h3m433 0h3m-443 1h4m439 0h4m-450 1h3m447 0h3m-455 1h2m11 0h2m427 0h2m11 0h2m-447 1h3m431 0h3m-441 1h4m437 0h4m-448 1h3m445 0h3m-440 1h2m425 0h2m-432 1h3m429 0h3m-438 1h3m435 0h3m-444 1h3m441 0h3m-449 1h2m447 0h2m-437 3h2m419 0h2m-425 1h2m423 0h2m-430 1h3m427 0h3m-436 1h3m433 0h3m-441 1h2m439 0h2m-433 1h2m419 0h2m-426 1h3m423 0h3m-432 1h3m429 0h3m-437 1h2m9 0h2m413 0h2m9 0h2m-441 1h2m9 0h2m417 0h2m9 0h2m-435 1h3m421 0h2m-428 1h2m426 0h3m-433 1h2m7 0h2m413 0h2m7 0h2m-437 1h2m7 0h2m417 0h2m7 0h2m-432 1h2m421 0h2m-427 1h2m425 0h2m-431 1h2m429 0h2m-420 2h2m-4 1h2m406 0h2m-412 1h2m410 0h2m-416 1h2m414 0h2m-420 1h2m8 0h2m408 0h2m-424 1h2m8 0h2m402 0h2m8 0h2m-418 1h2m406 0h2m8 0h2m-422 1h2m410 0h2m-416 1h2m7 0h2m397 0h2m6 0h2m-420 1h2m7 0h2m401 0h2m6 0h2m-415 1h2m413 0h2m-9 1h2m-413 1h2m6 0h2m395 0h2m6 0h2m-417 1h2m6 0h2m399 0h2m6 0h2m-413 1h2m403 0h2m-409 1h2m407 0h2m-413 1h2m411 0h2m-403 3h2m387 0h2m-394 2h2m393 0h2m-399 1h2m5 0h2m383 0h2m5 0h2m-404 2h2m5 0h2m389 0h2m5 0h2m-402 1h2m6 0h2m377 0h2m6 0h2m-400 2h2m6 0h2m383 0h2m6 0h2m-390 1h2m373 0h2m-385 1h2m389 0h2m-388 1h2m379 0h2m-391 1h2m395 0h2m-394 1h2m385 0h2m-392 2h2m391 0h2m-382 1h2m365 0h2m-373 3h2m5 0h2m359 0h2m5 0h2m-381 3h2m5 0h2m367 0h2m5 0h2m-373 1h2m357 0h2m-370 2h2m375 0h2m-376 3h2m4 0h2m363 0h2m-7 1h2m-357 5h2m348 1h2m-349 2h2m342 1h2m-343 2h2m336 1h2"/>
<path transform="translate(.5,0)" stroke="#808080" d="m73 226v1m0 145v1m4 11v1m5-183v1m0 193v1m3-202v1m0 207v1m2-213v1m0 215v1m2-221v1m0 223v1m1-197v1m0 167v1m1-200v1m0 229v1m2-207v1m0 181v1m1-201v1m0 217v1m1-233v1m0 245v1m2-250v1m0 251v1m1-248v1m0 241v1m2-246v1m0 247v1m2-253v1m0 18v1m0 217v1m0 18v1m1-247v1m0 235v1m1-250v1m0 261v1m1-258v1m0 4v1m0 241v1m0 4v1m1-243v1m0 231v1m1-246v1m0 257v1m1-254v1m0 4v1m0 237v1m0 4v1m1-268v1m0 4v1m0 275v1m0 4v1m1-281v1m0 9v1m0 253v1m0 9v1m2-284v1m0 4v1m0 281v1m0 4v1m1-287v1m0 4v1m0 269v1m0 4v1m1-291v1m0 15v1m0 267v1m1-284v1m0 4v1m0 287v1m0 4v1m1-298v1m0 4v1m0 4v1m0 275v1m0 4v1m0 4v1m1-296v1m0 4v1m0 4v1m0 4v1m0 263v1m0 4v1m0 4v1m0 4v1m1-294v1m0 4v1m0 281v1m0 4v1m2-302v1m0 19v1m0 269v1m0 19v1m1-310v1m0 9v1m0 4v1m0 277v1m0 4v1m0 9v1m1-314v1m0 5v1m0 9v1m0 4v1m0 275v1m0 4v1m0 9v1m0 5v1m1-318v1m0 5v1m0 9v1m0 283v1m0 9v1m0 5v1m1-316v1m0 15v1m0 281v1m0 15v1m1-320v1m0 5v1m0 311v1m0 5v1m1-324v1m0 5v1m0 4v1m0 299v1m0 4v1m0 5v1m1-322v1m0 10v1m0 297v1m0 10v1m1-326v1m0 5v1m0 10v1m0 295v1m0 10v1m0 5v1m1-330v1m0 5v1m0 4v1m0 5v1m0 293v1m0 5v1m0 4v1m0 5v1m1-328v1m0 10v1m0 303v1m0 10v1m1-326v1m0 10v1m0 53v1m0 193v1m0 53v1m0 10v1m1-324v1m0 4v1m0 5v1m0 299v1m0 5v1m0 4v1m1-322v1m0 4v1m0 58v1m0 191v1m0 58v1m0 4v1m1-332v1m0 11v1m0 4v1m0 307v1m0 4v1m0 11v1m1-342v1m0 11v1m0 4v1m0 57v1m0 189v1m0 57v1m0 4v1m0 11v1m1-340v1m0 11v1m0 313v1m0 11v1m1-344v1m0 5v1m0 11v1m0 61v1m0 187v1m0 61v1m0 11v1m0 5v1m1-348v1m0 5v1m0 333v1m0 5v1m1-346v1m0 5v1m0 73v1m0 183v1m0 73v1m0 5v1m1-350v1m0 5v1m0 5v1m0 329v1m0 5v1m0 5v1m1-354v1m0 5v1m0 5v1m0 72v1m0 181v1m0 72v1m0 4v2m0 5v1m1-352v1m0 5v2m0 4v1m0 325v1m0 4v1m0 6v1m1-350v1m0 6v1m0 4v1m0 71v1m0 179v1m0 71v1m0 4v1m0 6v1m1-354v1m0 5v1m0 6v1m0 331v1m0 5v2m0 5v1m1-358v1m0 5v2m0 5v1m0 75v1m0 177v1m0 75v1m0 5v1m0 6v1m1-356v1m0 6v1m0 5v1m0 327v1m0 5v1m0 6v1m1-354v1m0 6v1m0 80v1m0 175v1m0 80v1m0 5v2m1-352v2m0 5v1m0 335v1m0 5v1m1-360v1m0 11v1m0 5v1m0 79v1m0 173v1m0 79v1m0 5v1m0 11v1m1-370v1m0 11v1m0 343v1m0 11v1m1-368v1m0 11v1m0 85v1m0 169v1m0 85v1m0 11v1m1-366v1m0 11v1m0 339v1m0 11v1m1-370v1m0 5v1m0 96v1m0 167v1m0 95v2m0 5v1m1-374v2m0 4v2m0 357v1m0 5v2m1-371v1m0 5v1m0 94v1m0 165v1m0 94v1m0 5v1m1-375v1m0 6v1m0 5v1m0 353v1m0 5v1m0 6v1m1-380v2m0 5v1m0 5v1m0 93v1m0 163v1m0 93v1m0 5v1m0 5v2m1-377v1m0 5v1m0 5v1m0 349v1m0 5v1m0 5v1m1-374v1m0 5v2m0 97v1m0 161v1m0 97v2m0 5v1m1-379v2m0 5v2m0 5v1m0 355v1m0 5v2m0 5v2m1-383v1m0 6v1m0 5v1m0 96v1m0 159v1m0 96v1m0 5v1m0 6v1m1-380v1m0 6v1m0 363v1m0 6v1m1-378v2m0 5v2m0 100v1m0 157v1m0 100v2m0 5v2m1-375v1m0 6v1m0 357v1m0 6v1m1-372v1m0 107v1m0 153v1m0 107v1m1-370v2m0 365v2m1-382v2m0 13v1m0 105v1m0 151v1m0 105v1m0 13v2m1-393v1m0 389v1m1-390v2m0 117v1m0 149v1m0 117v2m1-394v2m0 5v1m0 383v1m0 5v2m1-397v1m0 5v2m0 115v1m0 147v1m0 115v2m0 5v1m1-394v2m0 5v1m0 377v1m0 5v2m1-399v1m0 7v1m0 5v2m0 113v1m0 145v1m0 113v2m0 5v1m0 7v1m1-404v2m0 6v2m0 383v2m0 6v2m1-401v1m0 7v1m0 118v1m0 143v1m0 118v1m0 7v1m1-404v1m0 5v2m0 6v2m0 377v2m0 6v2m0 5v1m1-408v2m0 5v2m0 124v1m0 139v1m0 124v2m0 5v2m1-405v1m0 6v1m0 387v1m0 6v1m1-402v2m0 5v2m0 122v1m0 260v2m0 5v2m1-399v2m0 5v1m0 381v1m0 5v2m1-395v1m0 127v1m0 135v1m0 127v1m1-392v2m0 387v2m1-389v1m0 125v1m0 259v1m1-402v1m0 415v1m1-416v2m0 139v1m0 131v1m0 139v2m1-413v2m0 407v2m1-416v1m0 6v2m0 136v1m0 129v1m0 136v2m0 6v1m1-420v2m0 6v2m0 399v2m0 6v2m1-417v2m0 6v2m0 133v1m0 127v1m0 133v2m0 6v2m1-413v1m0 7v1m0 393v1m0 6v2m1-418v1m0 7v2m0 140v1m0 123v1m0 140v1m0 7v2m1-424v2m0 7v2m0 401v2m0 6v2m1-420v2m0 7v2m0 137v1m0 121v1m0 137v2m0 6v2m1-416v2m0 410v2m1-421v1m0 8v2m0 143v1m0 119v1m0 142v2m0 8v2m1-428v2m0 8v2m0 402v2m0 8v2m1-424v2m0 8v2m0 140v1m0 117v1m0 140v1m0 8v2m1-420v2m0 414v2m1-416v2m0 147v1m0 115v1m0 146v2m1-412v2m0 406v2m1-408v2m0 144v1m0 113v1m0 144v1m1-420v1m0 48v1m0 335v1m0 48v1m1-434v2m0 48v1m0 110v1m0 109v1m0 110v1m0 48v2m1-431v2m0 48v1m0 327v1m0 48v2m1-427v2m0 48v1m0 107v1m0 107v1m0 107v1m0 48v2m1-432v2m0 7v2m0 417v2m0 7v2m1-437v2m0 7v2m0 46v1m0 106v1m0 212v1m0 46v2m0 7v2m1-433v2m0 7v1m0 47v1m0 315v1m0 47v1m0 6v3m1-429v3m0 54v1m0 103v1m0 103v1m0 103v1m0 54v2m1-434v2m0 9v2m0 54v1m0 307v1m0 54v2m0 9v2m1-441v2m0 9v2m0 54v1m0 202v1m0 100v1m0 54v2m0 9v2m1-437v3m0 64v1m0 299v1m0 64v3m1-432v3m0 161v1m0 99v1m0 161v3m1-438v2m0 10v2m0 61v1m0 295v1m0 61v2m0 10v2m1-445v2m0 10v1m0 62v1m0 97v1m0 95v1m0 97v1m0 62v1m0 10v2m1-441v3m0 72v1m0 287v1m0 72v3m1-436v3m0 71v1m0 94v1m0 93v1m0 94v1m0 71v3m1-430v2m0 71v1m0 279v1m0 71v2m1-425v2m0 71v1m0 91v1m0 91v1m0 91v1m0 71v2m1-348v1m0 271v1m1-182v1m0 89v1m1-271v2m0 89v1m0 267v1m0 89v2m1-449v3m0 88v1m0 87v1m0 87v1m0 87v1m0 88v3m1-444v3m0 87v1m0 259v1m0 87v3m1-438v3m0 86v1m0 84v1m0 85v1m0 84v1m0 86v3m1-444v1m0 11v2m0 86v1m0 251v1m0 86v2m0 11v1m1-452v3m0 98v1m0 81v1m0 83v1m0 81v1m0 98v3m1-448v4m0 437v4m1-441v3m0 93v1m0 81v1m0 79v1m0 81v1m0 93v3m1-447v2m0 11v2m0 93v1m0 239v1m0 93v2m0 11v2m1-455v3m0 105v1m0 78v1m0 77v1m0 78v1m0 105v3m1-450v4m0 103v1m0 231v1m0 103v4m1-443v3m0 102v1m0 75v1m0 75v1m0 75v1m0 102v3m1-449v3m0 10v2m0 102v1m0 223v1m0 102v2m0 10v3m1-456v4m0 112v1m0 72v1m0 73v1m0 185v4m1-449v4m0 437v4m1-441v3m0 107v1m0 71v1m0 71v1m0 71v1m0 107v3m1-325v1m0 211v1m1-211v1m0 68v1m0 69v1m0 68v1m1-207v1m0 203v1m1-203v1m0 66v1m0 65v1m0 66v1m1-332v3m0 130v1m0 195v1m0 130v3m1-460v4m0 192v1m0 63v1m0 192v4m1-453v4m0 124v1m0 191v1m0 124v4m1-445v3m0 186v1m0 61v1m0 62v1m0 123v3m1-453v3m0 137v1m0 321v3m1-462v4m0 135v1m0 59v1m0 59v1m0 59v1m0 135v4m1-455v4m0 133v1m0 175v1m0 133v4m1-447v3m0 132v1m0 56v1m0 57v1m0 56v1m0 132v3m1-455v3m0 314v1m0 146v3m1-464v4m0 142v1m0 55v1m0 55v1m0 198v4m1-457v4m0 140v1m0 163v1m0 140v4m1-449v3m0 139v1m0 52v1m0 53v1m0 52v1m0 139v3m1-457v3m0 153v1m0 155v1m0 153v3m1-466v4m0 151v1m0 50v1m0 49v1m0 50v1m0 151v4m1-459v4m0 149v1m0 147v1m0 149v4m1-451v3m0 148v1m0 47v1m0 47v1m0 47v1m0 148v3m2-294v1m0 46v1m0 45v1m0 46v1m1-139v1m0 135v1m1-135v1m0 43v1m0 43v1m0 43v1m1-302v3m0 168v1m0 127v1m0 168v3m1-468v7m0 163v1m0 40v1m0 41v1m0 40v1m0 101v1m0 61v7m1-458v4m0 161v1m0 119v1m0 102v1m0 58v4m1-246v1m0 39v1m0 141v1m1-399v4m0 174v1m0 115v1m0 102v1m0 71v4m1-469v6m0 170v1m0 37v1m0 35v1m0 37v1m0 103v1m0 66v6m1-459v4m0 168v1m0 107v1m0 104v1m0 63v4m1-279v1m0 34v1m0 33v1m0 34v1m0 105v1m1-396v4m0 183v1m0 99v1m0 106v1m0 76v4m1-471v7m0 178v1m0 31v1m0 31v1m0 31v1m0 107v1m0 70v7m1-460v3m0 177v1m0 91v1m0 108v1m0 68v3m1-242v1m0 29v1m0 138v1m1-199v1m0 87v1m1-282v7m0 188v1m0 27v1m0 27v1m0 27v1m0 188v7m1-468v7m0 183v1m0 79v1m0 183v7m1-269v1m0 24v1m0 25v1m0 24v1m1-75v1m0 71v1m1-71v1m0 21v1m0 23v1m0 21v1m2-67v1m0 21v1m0 19v1m0 21v1m1-63v1m0 59v1m1-268v6m0 203v1m0 18v1m0 17v1m0 18v1m0 202v7m1-469v8m0 197v1m0 51v1m0 197v7m1-255v1m0 15v1m0 15v1m0 15v1m1-47v1m0 43v1m1-261v7m0 211v1m0 12v1m0 13v1m0 12v1m0 210v8m1-470v7m0 449v6m1-249v1m0 11v1m0 11v1m0 11v1m1-35v1m0 31v1m1-255v7m0 217v1m0 8v1m0 9v1m0 8v1m0 217v7m1-470v7m0 212v1m0 23v1m0 212v7m1-242v1m0 6v1m0 5v1m0 6v1m1-19v1m0 15v1m1-247v7m0 229v1m0 233v7m1-470v7m0 218v1m0 11v1m0 218v7m1-236v1m0 2v1m0 1v1m0 2v1m1-7v1m1 1v1m1-3v1m1-3v1m0 2v1m0 1v1m0 2v1m1-236v7m0 218v1m0 11v1m0 218v7m1-470v7m0 229v1m0 233v7m1-247v1m0 15v1m1-19v1m0 6v1m0 5v1m0 6v1m1-242v7m0 212v1m0 23v1m0 212v7m1-470v7m0 217v1m0 8v1m0 9v1m0 8v1m0 217v7m1-255v1m0 31v1m1-35v1m0 11v1m0 11v1m0 11v1m1-250v8m0 447v7m1-468v6m0 211v1m0 12v1m0 13v1m0 12v1m0 210v7m1-260v1m0 43v1m1-47v1m0 15v1m0 15v1m0 15v1m1-256v8m0 197v1m0 51v1m0 197v7m1-468v6m0 203v1m0 18v1m0 17v1m0 18v1m0 202v7m1-268v1m0 59v1m1-63v1m0 21v1m0 19v1m0 21v1m2-67v1m0 21v1m0 23v1m0 21v1m1-71v1m0 71v1m1-75v1m0 24v1m0 25v1m0 24v1m1-269v7m0 183v1m0 79v1m0 183v7m1-468v7m0 188v1m0 27v1m0 27v1m0 27v1m0 188v7m1-282v1m0 87v1m1-60v1m0 29v1m1-242v4m0 176v1m0 91v1m0 176v4m1-460v7m0 178v1m0 31v1m0 31v1m0 31v1m0 178v7m1-470v3m0 183v1m0 99v1m0 183v3m1-289v1m0 34v1m0 33v1m0 34v1m1-279v4m0 168v1m0 107v1m0 168v4m1-459v6m0 170v1m0 37v1m0 35v1m0 37v1m0 170v6m1-469v4m0 174v1m0 115v1m0 174v4m1-257v1m0 39v1m1-246v4m0 161v1m0 119v1m0 161v4m1-458v7m0 163v1m0 40v1m0 41v1m0 40v1m0 163v7m1-468v3m0 168v1m0 127v1m0 168v3m1-302v1m0 43v1m0 43v1m0 43v1m1-135v1m0 135v1m1-139v1m0 46v1m0 45v1m0 46v1m2-294v3m0 148v1m0 47v1m0 47v1m0 47v1m0 148v3m1-451v4m0 149v1m0 147v1m0 149v4m1-459v4m0 151v1m0 50v1m0 49v1m0 50v1m0 151v4m1-465v2m0 153v1m0 155v1m0 153v2m1-456v3m0 139v1m0 52v1m0 53v1m0 52v1m0 139v3m1-449v4m0 140v1m0 163v1m0 140v4m1-457v4m0 142v1m0 55v1m0 55v1m0 198v4m1-464v3m0 314v1m0 146v3m1-455v3m0 132v1m0 56v1m0 57v1m0 56v1m0 132v3m1-447v4m0 133v1m0 175v1m0 133v4m1-455v4m0 135v1m0 59v1m0 59v1m0 59v1m0 135v4m1-462v3m0 137v1m0 183v1m0 137v3m1-453v3m0 123v1m0 62v1m0 61v1m0 62v1m0 123v3m1-445v4m0 124v1m0 191v1m0 124v4m1-453v4m0 192v1m0 63v1m0 192v4m1-460v3m0 130v1m0 195v1m0 130v3m1-332v1m0 66v1m0 65v1m0 66v1m1-203v1m0 203v1m1-207v1m0 68v1m0 69v1m0 68v1m1-211v1m0 211v1m1-325v3m0 107v1m0 71v1m0 71v1m0 71v1m0 107v3m1-441v4m0 437v4m1-449v4m0 112v1m0 72v1m0 73v1m0 72v1m0 112v4m1-456v3m0 10v2m0 102v1m0 223v1m0 102v2m0 10v3m1-449v3m0 102v1m0 75v1m0 75v1m0 75v1m0 102v3m1-443v4m0 103v1m0 231v1m0 103v4m1-450v3m0 105v1m0 78v1m0 77v1m0 78v1m0 105v3m1-455v2m0 11v2m0 93v1m0 239v1m0 93v2m0 11v2m1-447v3m0 93v1m0 81v1m0 79v1m0 81v1m0 93v3m1-441v4m0 437v4m1-448v3m0 98v1m0 81v1m0 83v1m0 81v1m0 98v3m1-452v1m0 11v2m0 86v1m0 251v1m0 86v2m0 11v1m1-444v3m0 86v1m0 84v1m0 85v1m0 84v1m0 86v3m1-438v3m0 87v1m0 259v1m0 87v3m1-444v3m0 88v1m0 87v1m0 87v1m0 87v1m0 88v3m1-449v2m0 89v1m0 267v1m0 89v2m1-271v1m0 89v1m1-182v1m0 271v1m1-348v2m0 71v1m0 91v1m0 91v1m0 91v1m0 71v2m1-425v2m0 71v1m0 279v1m0 71v2m1-430v3m0 71v1m0 94v1m0 93v1m0 94v1m0 71v3m1-436v3m0 72v1m0 287v1m0 72v3m1-441v2m0 10v1m0 62v1m0 96v1m0 97v1m0 96v1m0 62v1m0 10v2m1-444v1m0 10v2m0 61v1m0 295v1m0 61v2m0 10v1m1-437v3m0 161v1m0 99v1m0 161v3m1-432v3m0 64v1m0 299v1m0 64v3m1-437v2m0 9v2m0 54v1m0 202v1m0 100v1m0 54v2m0 9v2m1-441v2m0 9v2m0 54v1m0 307v1m0 54v2m0 9v2m1-435v3m0 54v1m0 103v1m0 103v1m0 103v1m0 54v2m1-428v2m0 7v1m0 47v1m0 315v1m0 47v1m0 6v3m1-433v2m0 7v2m0 46v1m0 106v1m0 212v1m0 46v2m0 7v2m1-437v2m0 7v2m0 417v2m0 7v2m1-432v2m0 48v1m0 107v1m0 107v1m0 107v1m0 48v2m1-427v2m0 48v1m0 327v1m0 48v2m1-431v2m0 48v1m0 110v1m0 109v1m0 110v1m0 48v2m1-434v1m0 48v1m0 335v1m0 48v1m1-421v2m0 144v1m0 113v1m0 144v1m1-408v2m0 406v2m1-412v2m0 147v1m0 115v1m0 146v2m1-416v2m0 414v2m1-420v2m0 8v2m0 140v1m0 117v1m0 140v1m0 8v2m1-424v2m0 8v2m0 402v2m0 8v2m1-427v1m0 8v2m0 143v1m0 119v1m0 142v2m0 8v2m1-422v2m0 410v2m1-416v2m0 7v2m0 137v1m0 259v2m0 6v2m1-420v2m0 7v2m0 401v2m0 6v2m1-423v1m0 7v2m0 140v1m0 123v1m0 140v1m0 7v2m1-418v1m0 7v1m0 393v1m0 6v2m1-413v2m0 6v2m0 133v1m0 127v1m0 133v2m0 6v2m1-417v2m0 6v2m0 399v2m0 6v2m1-420v1m0 6v2m0 136v1m0 129v1m0 136v2m0 6v1m1-416v2m0 407v2m1-413v2m0 139v1m0 131v1m0 139v2m1-416v1m0 415v1m1-402v1m0 125v1m0 133v1m0 125v1m1-389v2m0 387v2m1-392v1m0 127v1m0 135v1m0 127v1m1-395v2m0 5v1m0 381v1m0 5v2m1-399v2m0 5v2m0 122v1m0 137v1m0 122v2m0 5v2m1-402v1m0 6v1m0 387v1m0 6v1m1-405v2m0 5v2m0 124v1m0 139v1m0 124v2m0 5v2m1-408v1m0 5v2m0 6v2m0 377v2m0 6v2m0 5v1m1-404v1m0 7v1m0 118v1m0 143v1m0 118v1m0 7v1m1-401v2m0 6v2m0 383v2m0 6v2m1-404v1m0 7v1m0 5v2m0 113v1m0 145v1m0 113v2m0 5v1m0 7v1m1-399v2m0 5v1m0 377v1m0 5v2m1-394v1m0 5v2m0 115v1m0 147v1m0 115v2m0 5v1m1-397v2m0 5v1m0 383v1m0 5v2m1-394v2m0 117v1m0 149v1m0 117v2m1-390v1m0 389v1m1-393v2m0 13v1m0 105v1m0 151v1m0 105v1m0 13v2m1-382v2m0 365v2m1-370v1m0 107v1m0 153v1m0 107v1m1-372v1m0 6v1m0 357v1m0 6v1m1-375v2m0 5v2m0 100v1m0 157v1m0 100v2m0 5v2m1-378v1m0 6v1m0 363v1m0 6v1m1-380v1m0 6v1m0 5v1m0 96v1m0 159v1m0 96v1m0 5v1m0 6v1m1-383v2m0 5v2m0 5v1m0 355v1m0 5v2m0 5v2m1-379v1m0 5v2m0 97v1m0 161v1m0 97v2m0 5v1m1-374v1m0 5v1m0 5v1m0 349v1m0 5v1m0 5v1m1-377v2m0 5v1m0 5v1m0 93v1m0 163v1m0 93v1m0 5v1m0 5v2m1-380v1m0 6v1m0 5v1m0 353v1m0 5v1m0 6v1m1-375v1m0 5v1m0 94v1m0 165v1m0 94v1m0 5v1m1-371v2m0 4v2m0 357v1m0 5v2m1-374v1m0 5v1m0 96v1m0 167v1m0 95v2m0 5v1m1-370v1m0 11v1m0 339v1m0 11v1m1-366v1m0 11v1m0 85v1m0 169v1m0 85v1m0 11v1m1-368v1m0 11v1m0 343v1m0 11v1m1-358v1m0 5v1m0 79v1m0 173v1m0 79v1m0 5v1m1-349v2m0 5v1m0 335v1m0 5v1m1-351v1m0 6v1m0 80v1m0 175v1m0 80v1m0 5v2m1-354v1m0 6v1m0 5v1m0 327v1m0 5v1m0 6v1m1-356v1m0 5v2m0 5v1m0 75v1m0 177v1m0 75v1m0 5v1m0 6v1m1-358v1m0 5v1m0 6v1m0 331v1m0 5v2m0 5v1m1-354v1m0 6v1m0 4v1m0 71v1m0 179v1m0 71v1m0 4v1m0 6v1m1-350v1m0 5v2m0 4v1m0 325v1m0 4v1m0 6v1m1-352v1m0 5v1m0 5v1m0 72v1m0 181v1m0 72v1m0 4v2m0 5v1m1-354v1m0 5v1m0 5v1m0 329v1m0 5v1m0 5v1m1-350v1m0 5v1m0 73v1m0 183v1m0 73v1m0 5v1m1-346v1m0 5v1m0 333v1m0 5v1m1-348v1m0 5v1m0 11v1m0 61v1m0 187v1m0 61v1m0 11v1m0 5v1m1-344v1m0 11v1m0 313v1m0 11v1m1-340v1m0 11v1m0 4v1m0 57v1m0 189v1m0 57v1m0 4v1m0 11v1m1-342v1m0 11v1m0 4v1m0 307v1m0 4v1m0 11v1m1-332v1m0 4v1m0 58v1m0 191v1m0 58v1m0 4v1m1-322v1m0 4v1m0 5v1m0 299v1m0 5v1m0 4v1m1-324v1m0 4v1m0 5v1m0 53v1m0 193v1m0 53v1m0 5v1m0 4v1m1-326v1m0 10v1m0 303v1m0 10v1m1-328v1m0 10v1m0 5v1m0 293v1m0 5v1m0 10v1m1-330v1m0 5v1m0 4v1m0 5v1m0 295v1m0 5v1m0 4v1m0 5v1m1-326v1m0 10v1m0 297v1m0 10v1m1-322v1m0 10v1m0 299v1m0 10v1m1-324v1m0 5v1m0 4v1m0 301v1m0 4v1m0 5v1m1-320v1m0 15v1m0 281v1m0 15v1m1-316v1m0 15v1m0 283v1m0 15v1m1-318v1m0 5v1m0 9v1m0 4v1m0 275v1m0 4v1m0 9v1m0 5v1m1-314v1m0 9v1m0 4v1m0 277v1m0 4v1m0 9v1m1-310v1m0 9v1m0 9v1m0 269v1m0 9v1m0 9v1m2-297v1m0 281v1m1-289v1m0 4v1m0 4v1m0 4v1m0 263v1m0 4v1m0 4v1m0 4v1m1-296v1m0 4v1m0 4v1m0 275v1m0 4v1m0 4v1m1-298v1m0 4v1m0 287v1m0 4v1m1-300v1m0 15v1m0 267v1m1-275v1m0 4v1m0 269v1m0 4v1m1-287v1m0 4v1m0 281v1m0 4v1m2-284v1m0 9v1m0 253v1m0 9v1m1-281v1m0 4v1m0 275v1m0 4v1m1-268v1m0 4v1m0 237v1m0 4v1m1-254v1m0 257v1m1-246v1m0 231v1m1-243v1m0 4v1m0 241v1m0 4v1m1-258v1m0 261v1m1-250v1m0 235v1m1-247v1m0 18v1m0 217v1m0 18v1m2-253v1m0 247v1m1-227v1m0 203v1m1-224v1m0 241v1m1-248v1m0 27v1m0 195v1m0 27v1m1-235v1m0 215v1m1-232v1m0 245v1m2-215v1m0 181v1m2-207v1m0 229v1m1-200v1m0 167v1m1-197v1m0 223v1m7-210v1m0 193v1m5-13v1m4-159v1m0 145v1"/>
<path transform="translate(0,.5)" stroke="#f00" d="m478 106h3m7 0h3m258 2h3m-2 38h2m-8 1h2m2 0h2m0 2h2m-478 16h2m-4 3h2m-5 3h2m-2 1h2m-4 2h2m-3 2h2m-6 4h3m-5 4h2m-3 1h2m-4 3h2m488 0h3m-494 1h2m-4 3h2m-3 1h2m492 1h3m-499 2h2m-3 1h2m-3 1h2m-4 3h2m-3 1h2m-4 3h2m-3 1h2m-3 1h2m-3 2h2m-3 1h2m-3 1h2m-3 2h2m-3 1h2m-3 1h2m-3 2h2m-3 1h2m-3 1h2m-3 1h2m-2 1h2m-3 1h2m-189 1h5m181 0h2m-3 1h2m-2 1h2m-3 1h2m-3 1h2m-3 1h2m-2 1h2m-3 1h2m-3 1h2m-3 1h2m-3 2h2m-3 1h2m-3 1h2m525 0h3m-5 1h2m3 0h2m-533 1h2m-3 1h2m-3 1h2m-3 1h2m-2 1h2m-3 1h2m528 0h2m3 0h2m-538 1h2m531 0h3m-537 1h2m-3 2h2m-3 1h2m-3 1h2m-3 2h2m-3 1h2m-3 1h2m-3 2h2m-3 1h2m-3 1h2m-4 3h2m-3 1h2m-4 3h2m-3 1h2m-4 3h2m-3 1h2m-5 4h2m556 3h3m-564 1h2m560 0h2m-7 2h2m-625 2h6m-2 1h2m56 0h2m559 2h2m-566 2h2m-69 1h5m625 0h2m-627 1h2m57 2h2m564 3h8m-638 4h5m40 13h2m-2 2h5m-4 1h4m-3 1h2m-6 5h2m8 0h4m5 8h4m4 7h3m-1 1h2m-1 1h3m-71 2h2m72 4h3m-1 1h2m-1 1h3m2 5h3m-86 1h15m70 0h2m-1 1h2m-1 1h2m-1 1h3m0 3h3m-1 1h2m-1 1h2m-1 1h2m-1 1h2m-1 1h3m-48 1h3m45 2h3m-1 1h2m-1 1h2m-1 1h2m-1 1h2m-1 1h2m-1 1h3m-2 1h3m-1 1h2m-1 1h2m-1 1h2m-1 1h2m-1 1h2m-1 1h2m-1 1h3m-2 1h3m-1 1h2m-1 1h2m-1 1h2m-7 1h2m4 0h2m-7 1h2m4 0h2m-1 1h2m-2 1h3m0 1h2m-1 1h3m-2 1h2m-1 1h2m-1 1h2m-8 1h2m5 0h2m-6 1h2m3 0h2m-1 1h2m0 1h2m-6 1h2m3 0h2m-2 1h3m-1 1h2m-1 1h2m-1 1h2m-5 1h2m2 0h2m2 3h2m-1 1h2m-5 1h2m2 0h2m-1 1h2m-1 1h2m-1 1h2m-3 2h2m3 1h2m-1 1h2m-1 1h2m-1 1h2m-4 1h2m1 0h2m4 5h2m-2 1h3m3 5h2m0 2h3m-2 1h3m-2 1h3m-1 1h2m0 2h2m-1 1h2m2 3h2m-1 1h2m-1 1h2m2 30h5m-7 1h2m5 0h2m-9 14h2m5 0h2m-7 1h5m57 58h5m-2 1h2"/>
<path transform="translate(.5,0)" stroke="#f00" d="m38 235v1m1 0v1m1-10v5m0 5v1m1-12v1m0 5v1m0 3v1m1-12v1m0 7v3m1-12v1m6-1v1m1 0v1m0 7v3m1-10v1m0 5v1m0 3v1m1-10v5m0 5v1m1 0v1m1 0v1m58 50v5m1-6v1m0 5v1m1-8v1m0 7v1m5 52v1m1-54v1m0 50v2m1-60v1m0 5v1m0 49v2m1-60v1m0 2v5m0 44v1m0 3v2m1-59v1m0 53v3m1-58v1m1-2v1m1-2v1m2-1v4m1 51v12m0 1v2m1-16v1m1-2v1m19-31v1m1 12v1m0 2v1m5-17v1m0 1v1m1-2v1m0 1v1m1-2v1m0 1v1m0 6v1m0 2v1m0 1v1m1-20v1m0 5v1m0 1v1m0 3v2m0 1v1m1-5v1m0 2v1m0 2v1m1-21v1m0 15v1m0 7v1m1-14v1m0 3v1m0 6v1m1-13v1m1-14v1m0 11v1m0 5v1m0 8v1m0 2v1m1-21v2m0 1v2m0 2v1m0 1v1m1-23v1m0 14v1m0 5v1m0 1v1m0 7v1m1-21v1m0 2v1m0 7v1m0 1v1m0 10v1m1-26v1m0 2v1m0 9v1m0 9v1m1-37v1m0 10v2m0 1v1m0 12v1m0 42v1m1-61v1m0 2v1m0 15v1m0 8v1m0 1v1m1-44v1m0 11v1m0 1v2m0 17v1m1-24v2m0 1v1m0 18v1m0 1v1m0 7v1m1-34v1m0 2v1m0 20v1m0 1v1m0 10v1m1-50v1m0 10v1m0 1v2m0 22v1m0 1v1m0 7v1m1-39v2m0 1v1m0 25v1m0 1v1m0 37v1m1-82v1m0 10v1m0 2v1m0 27v1m0 1v1m0 7v1m0 1v1m1-45v1m0 1v2m0 29v1m0 38v1m1-74v1m0 1v1m0 32v1m0 8v1m0 29v1m1-87v1m0 9v1m0 2v1m0 35v1m0 10v1m0 24v1m1-77v1m0 2v1m0 37v1m0 7v1m1-62v1m0 10v1m0 1v1m0 38v1m0 1v1m0 34v2m1-82v1m0 2v1m0 40v1m0 1v1m0 7v1m0 1v1m1-58v1m0 2v1m0 42v1m0 1v1m0 33v1m1-94v1m0 9v1m0 1v1m0 45v1m0 1v1m0 6v1m0 26v1m1-87v1m0 2v1m0 47v1m0 10v1m0 22v1m1-97v1m0 9v1m0 2v1m0 49v1m0 8v1m1-64v1m0 1v1m0 85v2m1-91v1m0 1v1m0 62v1m0 2v1m1-80v1m0 8v1m0 2v1m0 57v1m0 30v1m1-94v1m0 2v1m0 59v1m0 6v1m0 24v1m1-107v1m0 9v1m0 1v1m0 60v1m0 1v1m0 8v1m0 19v1m1-97v1m0 2v1m0 62v1m0 1v1m0 6v1m1-77v1m0 2v1m0 64v1m0 1v1m0 27v1m0 1v1m1-111v1m0 8v1m0 1v1m0 67v1m0 7v1m0 2v1m1-81v1m0 69v1m0 28v1m1-113v1m0 8v1m0 2v1m0 79v1m0 21v1m1-107v1m0 86v1m0 16v1m1-104v1m0 77v1m0 6v1m1-98v1m0 7v1m0 2v1m0 79v1m0 24v1m0 1v1m1-112v1m0 82v1m0 1v1m0 5v1m0 1v1m1-104v1m0 10v1m0 82v1m0 1v1m0 23v1m1-114v1m0 2v1m0 84v1m0 7v1m0 19v1m1-118v1m0 89v1m0 9v1m0 13v1m1-124v1m0 9v1m0 97v1m1-100v1m0 114v1m0 2v1m1-131v1m0 7v1m0 103v1m0 1v1m1 13v1m1-121v1m0 99v1m0 5v1m0 16v1m1-135v1m0 6v1m0 104v1m0 7v1m0 10v1m1-21v1m0 7v1m1-123v1m0 9v1m0 104v1m0 19v1m0 2v1m1-133v1m0 116v1m0 1v1m1 10v1m1-140v1m0 8v1m0 118v1m0 13v1m1-13v1m0 8v1m1-143v1m0 131v1m1-5v1m0 14v1m0 3v1m1-19v1m0 4v1m0 1v1m1-140v1m0 5v1m0 124v1m0 15v1m1-16v1m0 6v1m0 11v1m1-155v1m0 8v1m0 134v1m0 5v1m1-146v1m0 137v1m1 7v1m0 3v1m1-159v1m0 7v1m0 139v1m0 1v1m1 4v1m1-159v1m0 152v1m0 8v1m1-8v1m0 2v1m1-5v1m1-158v1m0 161v1m0 4v1m1-9v2m1 2v1m1-167v1m0 163v1m0 6v1m1-6v1m1-170v1m0 167v1m1 6v1m1-173v1m1-7v1m1 174v1m0 3v1m1-183v1m0 4v1m0 171v1m0 2v1m1-2v1m1-2v1m0 5v1m1-188v1m0 3v1m0 179v2m2-189v1m0 187v1m1-186v1m1-2v1m0 187v1m1-194v1m1 1v1m0 193v1m1-200v1m0 3v1m1 194v1m1-7v1m1-197v1m0 2v1m1-2v1m0 194v1m0 5v1m1-207v1m0 208v2m1-209v1m0 198v1m1-201v1m0 208v1m1-214v1m0 203v1m1-204v1m1-5v1m0 2v1m0 204v1m1 11v2m1-222v1m0 208v1m1-211v1m0 216v1m0 4v1m1-224v1m0 210v1m0 9v1m1-226v1m0 1v1m0 223v1m1-226v1m0 214v1m0 6v1m1-224v1m0 230v1m1-234v1m0 218v1m1 7v1m0 6v1m1-237v1m0 220v1m2-225v1m0 224v1m0 7v1m1-235v1m0 240v1m0 1v2m1-247v1m0 227v1m0 15v1m1-246v1m0 237v1m0 9v1m1-19v1m1-234v2m1-3v1m0 234v1m0 7v1m1-245v1m0 255v2m1-260v2m0 236v1m1-240v1m0 248v1m0 9v1m0 1v1m1-263v1m0 240v1m0 19v1m0 1v1m1-2v1m0 1v1m1-263v1m0 239v1m0 8v1m0 11v1m1 2v1m1-25v1m1 9v1m0 14v1m1-263v1m0 237v1m0 22v1m0 1v1m1-2v1m0 1v1m1-26v1m0 8v1m0 14v1m1 0v1m0 1v1m1-263v1m0 234v1m1 9v1m0 16v1m1-27v1m2-234v1m0 233v1m0 9v1m2-11v1m1 10v1m0 18v1m1-262v1m0 231v1m2 0v1m0 9v1m0 20v1m1 0v1m1-262v1m0 228v1m0 70v5m1-65v1m0 57v2m0 5v2m1-77v1m0 66v1m0 9v1m1-12v1m0 11v1m1-306v1m0 227v1m0 10v1m0 22v1m1 0v1m0 5v1m1-42v1m1 11v1m0 20v1m1-258v1m0 224v1m0 69v1m1-41v1m1-30v1m0 10v1m1 15v1m1-251v1m0 222v1m0 24v1m1-14v1m0 50v1m0 11v1m1-75v1m0 21v1m0 40v1m0 9v1m1-10v2m0 5v2m1-293v1m0 220v1m0 11v1m0 6v1m0 45v5m2-70v1m0 16v1m1-5v1m1-232v1m0 218v1m0 13v1m2-14v1m0 10v2m1-4v1m1-227v1m0 216v1m1 6v1m0 5v1m1-13v1m1 3v1m1-219v1m0 214v1m0 11v1m1-12v1m1-2v1m1-2v1m0 14v1m1-227v1m0 212v1m1-5v1m1 4v1m0 12v1m1-21v1m1-204v1m0 200v1m0 8v1m1 13v1m1-26v1m0 11v1m2-209v1m0 193v1m0 14v1m0 12v1m2-31v1m0 16v1m1 14v1m1-221v1m0 185v1m0 19v1m2-23v1m0 22v1m2-205v1m0 178v1m0 24v1m1-28v1m1 27v1m1-31v1m1-173v1m0 202v1m1-34v1m1 32v1m1-36v1m1-165v1m0 199v1m0 135v1m1-175v1m0 172v1m1-135v1m0 124v1m0 7v1m1-175v1m0 166v1m0 5v1m1-331v1m0 154v1m0 42v1m0 126v1m0 3v1m1-4v1m0 1v1m1-176v1m0 173v1m1-2v1m0 1v1m1-325v1m0 146v1m0 173v1m0 3v1m1-6v1m0 5v1m1-182v1m0 173v1m0 7v1m1-10v1m1-316v1m0 139v1m0 173v1m1-2v1m1-176v1m0 173v1m2-309v1m0 131v1m0 175v3m1-181v1m2-3v1m1-126v1m1 122v1m2-3v1m1-118v1m1 114v1m2-3v1m1-111v1m1 107v1m1-3v1m2-104v1m0 100v1m2-3v1m2-96v1m0 92v1m2-3v1m2-89v1m0 85v1m1-3v1m2-3v1m1-79v1m1 75v1m2-3v1m1-72v1m1 68v1m2-3v1m1-64v1m1 60v1m1-3v1m2-57v1m0 53v1m2-3v1m2-50v1m0 46v1m2-3v1m2-42v1m0 38v1m2-3v1m1-3v1m1-33v1m1 29v1m2-3v1m1-25v1m1 21v1m2-3v1m1-18v1m1 14v1m1-3v1m2-10v1m0 6v1m2-3v1m2-3v1m33-189v3m1-4v1m0 3v1m1 0v1m3-6v1m1 0v3m1 0v4m1 0v8m1-12v4m1-7v3m1-4v1m3 4v1m1-6v1m0 3v1m1-4v3m252-5v1m0 132v3m0 39v2m1-176v7m0 32v1m0 1v3m0 35v1m0 3v3m0 45v1m0 3v1m0 37v1m0 2v1m0 8v1m1-187v1m0 44v3m0 33v1m0 1v1m0 3v1m0 96v2m1-185v7m0 34v3m0 137v2m1-184v1m0 39v1m0 93v1m0 39v1m0 2v1m1-177v1m0 1v4m0 1v1m0 33v1m0 130v1m0 1v2m1-170v1m0 73v1m0 1v1m0 3v1m0 84v1m0 8v6m0 1v1m1-188v1m0 1v4m0 1v1m0 35v1m0 3v1m0 31v1m0 3v3m0 45v1m0 3v1m0 43v1m1-140v2m0 2v3m0 85v3m0 36v1"/>
<path transform="translate(0,.5)" stroke="#0f0" d="m227 40h11m-11 12h11m512 82h2m-8 36h9m-6 37h3m-5 1h2m3 0h2m-7 2h2m3 1h2m-7 2h2m3 0h2m-5 1h3m-3 43h3m-3 4h3m-4 2h5m-4 3h3m-3 4h3m-4 2h5m-5 37h5m-4 3h3m-203 48h2m4 0h2m-5 4h2m4 0h2m-11 6h2m4 0h2m-5 4h2m4 0h2m-178 76h5m-5 8h5m-7 4h9m-129 6h5m-5 8h5m12 0h9m-172 4h5m139 0h9m13 2h3m-175 4h7m3 0h7m155 0h3m-175 4h17"/>
<path transform="translate(.5,0)" stroke="#0f0" d="m110 482v3m1-4v1m0 3v1m6-5v1m0 3v1m1-4v3m40-178v1m3 1v1m3 1v1m3 0v1m3 1v1m3 1v1m3 0v1m3 1v1m3 1v1m3 1v1m3 0v1m3 1v1m3 1v1m3 1v1m3 0v1m3 1v1m3 1v1m3 0v1m3 1v1m3 1v1m3 1v1m3 0v1m3 1v1m1-308v1m0 15v1m1-16v1m0 13v1m1 293v1m2-307v11m1 296v1m3 1v1m2-310v11m1 300v1m2-314v1m0 13v1m1-16v1m0 15v1m0 299v1m3 0v1m3 1v1m3 1v1m3 1v1m3 0v1m2 103v1m0 3v5m1-111v1m0 102v1m0 1v1m0 5v1m3-110v1m0 110v3m0 1v2m3-116v1m0 99v1m0 1v1m0 5v1m1-10v1m0 3v5m2-106v1m3 1v1m3 1v1m1 96v1m0 9v1m1-34v1m0 23v1m0 7v1m1-106v1m0 97v4m0 1v2m2 4v3m1-110v1m1 70v1m0 26v2m0 1v5m2-104v1m0 104v3m2-14v4m0 1v2m1-100v1m0 91v1m0 7v1m1-10v1m0 9v1m2-100v1m3 1v1m3 1v1m3 0v1m3 1v1m3 1v1m3 1v1m3 0v1m3 1v1m3 1v1m3 0v1m3 1v1m3 1v1m3 1v1m3 0v1m3 1v1m3 1v1m6 2v1m3 1v1m3 1v1m3 0v1m3 1v1m3 1v1m3 1v1m3 0v1m6 7v1m10 19v5m1-6v1m0 5v1m3 1v3m0 1v4m3-16v1m0 5v1m1-6v5m158-92v1m0 9v1m1-13v2m0 8v2m1-13v1m0 9v1m1-12v1m0 9v1m1-13v1m0 9v1m1-9v3m0 7v3m1-9v1m0 9v1m1-13v1m0 9v1m1-12v1m0 9v1m1-12v1m0 9v1m1-13v1m0 9v1m1-9v3m0 7v3m1-9v1m0 9v1m1-13v1m0 9v1m1-12v1m0 9v1m1-13v2m0 8v2m1-13v1m0 9v1m184-244v1m0 39v1m0 7v1m0 34v1m0 1v2m1-86v7m0 33v1m0 5v1m0 132v1m0 4v1m1-186v1m0 41v2m0 1v2m0 83v1m0 1v3m0 6v3m0 37v2m0 1v1m1-184v7m0 77v2m0 100v1m1-188v1m0 135v1m0 1v1m0 6v1m0 1v2m0 33v1m0 1v2m0 2v1m1-188v7m0 75v2m0 102v1m1-146v2m0 1v2m0 83v1m0 1v3m0 6v3m0 37v2m0 1v1m1-144v1m0 5v1m0 132v1m0 4v1m1-180v2m0 32v1m0 7v1m0 34v2m0 1v1"/>
<path transform="translate(0,.5)" stroke="#ff0" d="m363 41h2m5 0h2m-7 1h5m-7 1h2m5 0h2m-9 10h2m5 0h2m-7 1h5m377 64h3m-6 3h4m1 0h4m-9 2h9m-8 34h2m1 0h2m-3 1h2m1 0h2m-7 4h2m1 0h2m-3 1h2m1 0h2m-6 34h6m-6 6h6m-7 94h5m-1 2h2m-4 1h2m-593 12h2m-107 50h2m-5 2h2m81 6h9m-1 4h3m-7 2h3m138 65h5m207 35h3m-14 1h2m5 0h2m2 5h3"/>
<path transform="translate(.5,0)" stroke="#ff0" d="m38 359v1m1 0v1m1 0v13m1-14v1m1-2v1m1 0v1m1 0v13m1-14v1m1-2v1m1 0v1m1 0v3m0 1v7m0 3v1m1-4v1m0 1v1m1-12v1m0 9v1m1-2v1m0 1v1m1-14v1m0 1v9m0 3v1m83-8v2m0 1v5m0 1v6m3-8v1m3 4v3m1-8v1m0 3v1m0 3v1m1-8v3m0 5v1m13-78v1m0 1v1m1 5v1m0 2v4m7 41v1m116-213v1m81-114v1m0 7v5m1-12v2m0 3v2m0 5v2m10-14v2m0 3v2m0 5v2m1-15v1m0 7v5m103 427v1m2-3v1m0 1v7m1 0v1m1 0v5m1-6v1m1-6v5m1-6v1m1-4v1m0 1v1m1 0v1m1-2v1m0 1v1m1-4v1m0 3v1m2 1v1m1 0v1m0 7v1m1-16v1m0 3v1m0 3v1m0 5v1m1-14v3m0 5v5m252-332v1m0 4v1m1-7v1m0 4v1m0 32v1m0 7v1m1-86v2m0 35v1m0 4v1m1-3v1m0 4v1m0 33v5m0 93v1m0 1v2m0 1v3m2-148v1m0 4v1m1-43v2m0 38v1m0 4v1m0 33v5m0 99v2m1-147v1m0 4v1m0 137v2m0 2v1m1-149v1m0 4v1m0 34v1m0 7v1"/>
<path transform="translate(0,.5)" stroke="#00f" d="m112 107h5m-8 1h3m6 1h3m-13 4h3m7 2h3m-13 4h3m6 1h3m-8 1h5m633 15h3m-2 1h2m-8 39h2m3 0h2m-5 40h3m-206 15h17m185 15h3m0 1h2m-2 6h2m-5 1h3m-274 33h5m0 1h2m-53 8h14m-43 1h29m-57 1h28m-57 1h29m-58 1h29m-57 1h28m-57 1h29m194 0h2m-254 1h29m218 0h5m-280 1h28m-57 1h29m-43 1h14m573 11h2m1 0h3m1 0h2m-6 3h3m-4 2h5m-4 8h3m-4 2h5m-566 98h3m-3 4h3m-6 3h2m5 0h2m-7 1h5m-7 4h9m161 20h3m2 0h5m2 0h3m-12 5h2m5 0h2m-7 1h5m-7 4h9m-127 84h3m-5 4h2"/>
<path transform="translate(.5,0)" stroke="#00f" d="m106 111v1m0 3v3m1-8v1m0 3v1m0 3v1m1-10v1m3 4v1m0 3v1m0 1v1m1-6v3m4-7v3m1-6v1m0 1v1m0 3v1m3 4v1m1-10v1m0 3v1m0 3v1m1-8v3m0 3v1m37 203v1m4-2v1m4-1v1m4-1v1m4-2v1m5 110v5m1 0v2m2-118v1m1 111v3m2 5v3m0 1v4m1-129v1m1 112v3m3-116v1m0 116v2m1-7v5m3-117v1m4-2v1m4-1v1m2 97v1m2-99v1m4-2v1m4-1v1m4-1v1m4-2v1m0 228v1m1 0v1m1 0v13m1-14v1m1-231v1m0 228v1m1 0v1m1 0v13m1-14v1m1-231v1m0 228v1m1 0v1m1 0v13m1 0v1m1-246v1m2 244v1m1-5v1m0 1v2m1-245v1m4-2v1m4-1v1m4-1v1m4-2v1m4-1v1m4-1v1m4-2v1m4-1v1m4-1v1m4-2v1m4-1v1m4-1v1m4-2v1m4-1v1m4-1v1m4-2v1m4-1v1m4-1v1m4-2v1m4-1v1m4-2v1m4-1v1m4-1v1m4-2v1m4-1v1m4-1v1m4-2v1m2 135v1m2-137v1m2 155v2m0 1v2m1 0v2m1-163v1m4-2v1m0 156v2m0 1v5m0 1v3m0 1v4m4-174v1m1 161v2m1-7v2m0 1v2m2-162v1m4-2v1m4-1v1m4-1v1m4-2v1m4-1v1m4-1v1m4-2v1m4-1v1m4-2v1m4-1v1m4-1v1m4-2v1m4-1v1m4-1v1m8-2v1m4-1v1m14-2v1m24-8v1m0 11v1m1-14v1m0 1v1m0 9v1m0 1v1m1-12v1m0 7v1m1-8v2m0 3v2m1-5v3m5-8v1m0 11v1m1-12v1m0 9v1m1-10v2m0 5v2m1-7v5m59-75v1m0 15v1m1-16v1m0 13v1m1-14v1m0 11v1m1-12v2m0 7v2m1-9v3m0 1v3m8-7v3m0 1v3m1-9v2m0 7v2m1-12v1m0 11v1m1-14v1m0 13v1m1-16v1m0 15v1m184-96v1m0 32v2m0 43v1m1-84v1m0 3v1m0 35v1m0 38v3m0 2v1m0 23v1m0 5v1m0 62v1m0 1v1m0 7v3m1-189v1m0 1v1m0 74v1m0 3v2m0 25v1m0 3v1m0 66v1m0 9v1m1-189v1m0 35v3m0 69v3m0 75v1m1-188v1m0 1v1m0 37v5m0 131v1m0 1v2m0 1v1m0 1v2m0 1v1m0 1v1m0 2v1m0 1v2m1-196v1m0 3v1m0 33v3m0 147v1m1-190v1m0 78v1m0 3v2m0 25v1m0 3v1m0 66v1m0 9v1m1-151v1m0 38v3m0 2v1m0 25v3m0 64v1m0 1v1m0 7v3m1-191v1m0 38v2m0 45v1"/>
<path transform="translate(0,.5)" stroke="#0ff" d="m182 371h2m4 4h2m4 5h2m4 4h2m10 9h2m-6 17h3m0 1h6m0 1h6m0 1h6m0 1h6m0 1h5m0 1h6m0 1h6m0 1h6m0 1h6m0 1h5m0 1h6m0 1h6m0 1h3m1 0h2m2 1h3m0 1h6m0 1h6m0 1h6m0 1h6m0 1h5m0 1h6m0 1h6m0 1h6m0 1h6"/>
<path transform="translate(.5,0)" stroke="#0ff" d="m170 362v1m3 1v1m2 0v1m1 0v1m1 0v1m2 0v2m2 0v1m4 2v1m2 0v1m4 2v2m2-1v1m4 2v2m2 0v1m4 2v2m2-1v1m1 1v1m1-2v1m2 1v2m2-1v1m4 2v1m0 1v1m2-1v1m1 1v1m1-2v1m2 0v1m0 1v1m2-1v1m1 2v1m1-3v1m2 1v1m0 1v1m2-2v1m1 2v1m1-2v1m2 0v1m0 1v1m2-1v1m1 2v1m1-3v1m2 0v1m0 2v1m2-2v1m2 0v1m2 3v1m3 2v1m1-3v1m2 0v1m0 2v1m2-2v1m1 2v1m1-3v1m2 0v1m0 2v1m2-2v1m1 3v1m1-4v1m2 1v1m0 2v1m2-3v1m1 3v1m1-3v1m2 0v1m0 2v1m2-2v1m1 3v1m1-4v1m2 0v1m0 3v1m2-3v1m2 0v1m8-17v1m58 9v1m2-1v1m18-9v1m1-3v1m1-3v1m2-3v1m1-3v1m1-3v1m1-3v1m1-3v1m2-3v1m1-3v1m1-3v1m1-3v1m1-3v1m2-3v1m1-3v1m1-3v1m1-3v1m1-3v1m2-3v1m1-3v1m1-3v1m1-3v1m1-3v1m2-3v1m1-3v1m1-3v1m1-3v1m1-3v1m2-3v1m1-3v1m1-3v1m1-3v1m1-3v1m2-3v1m1-3v1m1-3v1m1-3v1m1-3v1m2-3v1m1-3v1m1-3v1m1-3v1m1-3v1m2-3v1m1-3v1m1-3v1m1-3v1m1-3v1m2-3v1m1-3v1m1-3v1m1-3v1m1-3v1m2-3v1m1-3v1m1-3v1m1-3v1m1-3v1m2-3v1m1-3v1m1-3v1m1-3v1m1-3v1m2-3v1m1-3v1"/>
<path transform="translate(0,.5)" stroke="#008080" d="m117 299h5m-9 12h3m7 0h3m621 25h3m-5 6h2m3 0h2"/>
<path transform="translate(.5,0)" stroke="#008080" d="m111 313v1m1-2v1m0 1v1m1-12v5m0 7v1m1-14v1m0 5v1m0 5v1m1-14v1m0 7v2m0 1v2m1-14v1m6-1v1m1 0v1m0 7v2m0 1v2m1-12v1m0 5v1m0 5v1m1-12v5m0 7v1m1-4v1m0 1v1m1-2v1m23-6v1m594 34v1m1-6v3m0 3v1m1-8v1m0 3v1m0 1v1m4-7v1m0 3v1m0 1v1m1-6v3m0 3v1m1-2v1"/>
</g>
<g class="w">
<text class="h" transform="translate(96.5,358) scale(.85,1)" fill="#f00">1</text>
<text class="h" transform="translate(151.5,452) scale(.85,1)" fill="#ff0">2</text>
<text class="h" transform="translate(245.5,507) scale(.85,1)" fill="#0f0">3</text>
<text class="h" transform="translate(353.5,507) scale(.85,1)" fill="#00f">4</text>
<text class="h" transform="translate(447.5,452) scale(.85,1)" fill="#f00">5</text>
<text class="h" transform="translate(502.5,358) scale(.85,1)" fill="#ff0">6</text>
<text class="h" transform="translate(502.5,250) scale(.85,1)" fill="#0f0">7</text>
<text class="h" transform="translate(447.5,156) scale(.85,1)" fill="#00f">8</text>
<text class="h" transform="translate(353.5,101) scale(.85,1)" fill="#f00">9</text>
<text class="h" transform="translate(246.54,101) scale(.85,1)" fill="#ff0" letter-spacing="2.45">10</text>
<text class="h" transform="translate(152.54,156) scale(.85,1)" fill="#0f0" letter-spacing="2.45">11</text>
<text class="h" transform="translate(97.54,250) scale(.85,1)" fill="#00f" letter-spacing="2.45">12</text>
<text class="o" transform="translate(267,130) scale(.5,1)" fill="#ff0" font-size="23.7">MC</text>
<text class="o" transform="translate(112.4,335) scale(.4,1)" fill="#f00" font-size="23.7" letter-spacing="2">Asc</text>
</g>
<g class="s" xml:space="preserve">
<text y="14"><tspan x="605.5" fill="#fff">Astrolog 5.40</tspan></text>
<text y="24"><tspan x="605.5" fill="#c0c0c0">"Anonymous"</tspan></text>
<text y="34"><tspan x="605.5" fill="#c0c0c0">Tue November 27, 1979</tspan></text>
<text y="44"><tspan x="605.5" fill="#c0c0c0">12:30am (ST +8:00 GMT)</tspan></text>
<text y="54"><tspan x="605.5" fill="#c0c0c0">"China"</tspan></text>
<text y="64"><tspan x="605.5" fill="#c0c0c0">113°14E 23°10N</tspan></text>
<text y="74"><tspan x="605.5" fill="#c0c0c0">Whole houses.</tspan></text>
<text y="84"><tspan x="605.5" fill="#c0c0c0">Tropical, Geocentric.</tspan></text>
<text y="94"><tspan x="605.5" fill="#c0c0c0">Julian Day = 2444204.1875</tspan></text>
<text y="114"><tspan x="611.5" fill="#f00">1st house:</tspan><tspan x="683.5" fill="#ff0">0Vir00</tspan></text>
<text y="124"><tspan x="611.5" fill="#ff0">2nd house:</tspan><tspan x="683.5" fill="#0f0">0Lib00</tspan></text>
<text y="134"><tspan x="611.5" fill="#0f0">3rd house:</tspan><tspan x="683.5" fill="#00f">0Sco00</tspan></text>
<text y="144"><tspan x="611.5" fill="#00f">4th house:</tspan><tspan x="683.5" fill="#f00">0Sag00</tspan></text>
<text y="154"><tspan x="611.5" fill="#f00">5th house:</tspan><tspan x="683.5" fill="#ff0">0Cap00</tspan></text>
<text y="164"><tspan x="611.5" fill="#ff0">6th house:</tspan><tspan x="683.5" fill="#0f0">0Aqu00</tspan></text>
<text y="174"><tspan x="611.5" fill="#0f0">7th house:</tspan><tspan x="683.5" fill="#00f">0Pis00</tspan></text>
<text y="184"><tspan x="611.5" fill="#00f">8th house:</tspan><tspan x="683.5" fill="#f00">0Ari00</tspan></text>
<text y="194"><tspan x="611.5" fill="#f00">9th house:</tspan><tspan x="683.5" fill="#ff0">0Tau00</tspan></text>
<text y="204"><tspan x="605.5" fill="#ff0">10th house:</tspan><tspan x="683.5" fill="#0f0">0Gem00</tspan></text>
<text y="214"><tspan x="605.5" fill="#0f0">11th house:</tspan><tspan x="683.5" fill="#00f">0Can00</tspan></text>
<text y="224"><tspan x="605.5" fill="#00f">12th house:</tspan><tspan x="683.5" fill="#f00">0Leo00</tspan></text>
<text y="244"><tspan x="611.5" fill="#f00">Sun:</tspan><tspan x="647.5" fill="#f00">3Sag49</tspan><tspan x="695.5" fill="#c0c0c0">- 0°00'</tspan></text>
<text y="254"><tspan x="605.5" fill="#00f">Moon:</tspan><tspan x="647.5" fill="#00f">1Pis18</tspan><tspan x="695.5" fill="#c0c0c0">+ 0°13'</tspan></text>
<text y="264"><tspan x="605.5" fill="#0f0">Merc:</tspan><tspan x="641.5" fill="#00f">20Sco25</tspan><tspan x="683.5" fill="#fff">R</tspan><tspan x="695.5" fill="#c0c0c0">+ 2°13'</tspan></text>
<text y="274"><tspan x="605.5" fill="#0f0">Venu:</tspan><tspan x="641.5" fill="#f00">27Sag38</tspan><tspan x="695.5" fill="#c0c0c0">- 1°09'</tspan></text>
<text y="284"><tspan x="605.5" fill="#f00">Mars:</tspan><tspan x="647.5" fill="#ff0">2Vir58</tspan><tspan x="695.5" fill="#c0c0c0">+ 2°09'</tspan></text>
<text y="294"><tspan x="605.5" fill="#f00">Jupi:</tspan><tspan x="647.5" fill="#ff0">8Vir51</tspan><tspan x="695.5" fill="#c0c0c0">+ 0°58'</tspan></text>
<text y="304"><tspan x="605.5" fill="#ff0">Satu:</tspan><tspan x="641.5" fill="#ff0">25Vir31</tspan><tspan x="695.5" fill="#c0c0c0">+ 2°00'</tspan></text>
<text y="314"><tspan x="605.5" fill="#0f0">Uran:</tspan><tspan x="641.5" fill="#00f">22Sco04</tspan><tspan x="695.5" fill="#c0c0c0">+ 0°17'</tspan></text>
<text y="324"><tspan x="605.5" fill="#00f">Nept:</tspan><tspan x="641.5" fill="#f00">19Sag37</tspan><tspan x="695.5" fill="#c0c0c0">+ 1°21'</tspan></text>
<text y="334"><tspan x="605.5" fill="#00f">Plut:</tspan><tspan x="641.5" fill="#0f0">20Lib48</tspan><tspan x="695.5" fill="#c0c0c0">+16°45'</tspan></text>
<text y="344"><tspan x="605.5" fill="#008080">Node:</tspan><tspan x="647.5" fill="#ff0">3Vir46</tspan><tspan x="683.5" fill="#fff">R</tspan><tspan x="695.5" fill="#c0c0c0">+ 0°00'</tspan></text>
<text y="364"><tspan x="605.5" fill="#c0c0c0">Fire: 3, Earth: 5,</tspan></text>
<text y="374"><tspan x="605.5" fill="#c0c0c0">Air : 2, Water: 3</tspan></text>
<text y="384"><tspan x="605.5" fill="#c0c0c0">Car: 1, Fix: 2, Mut: 10</tspan></text>
<text y="394"><tspan x="605.5" fill="#c0c0c0">Yang: 5, Yin: 8</tspan></text>
<text y="404"><tspan x="605.5" fill="#c0c0c0">M: 1, N: 10, A: 7, D: 4</tspan></text>
<text y="414"><tspan x="605.5" fill="#c0c0c0">Ang: 8, Suc: 1, Cad: 2</tspan></text>
<text y="424"><tspan x="605.5" fill="#c0c0c0">Learn: 6, Share: 7</tspan></text>
</g>
</svg>
</body></html>
